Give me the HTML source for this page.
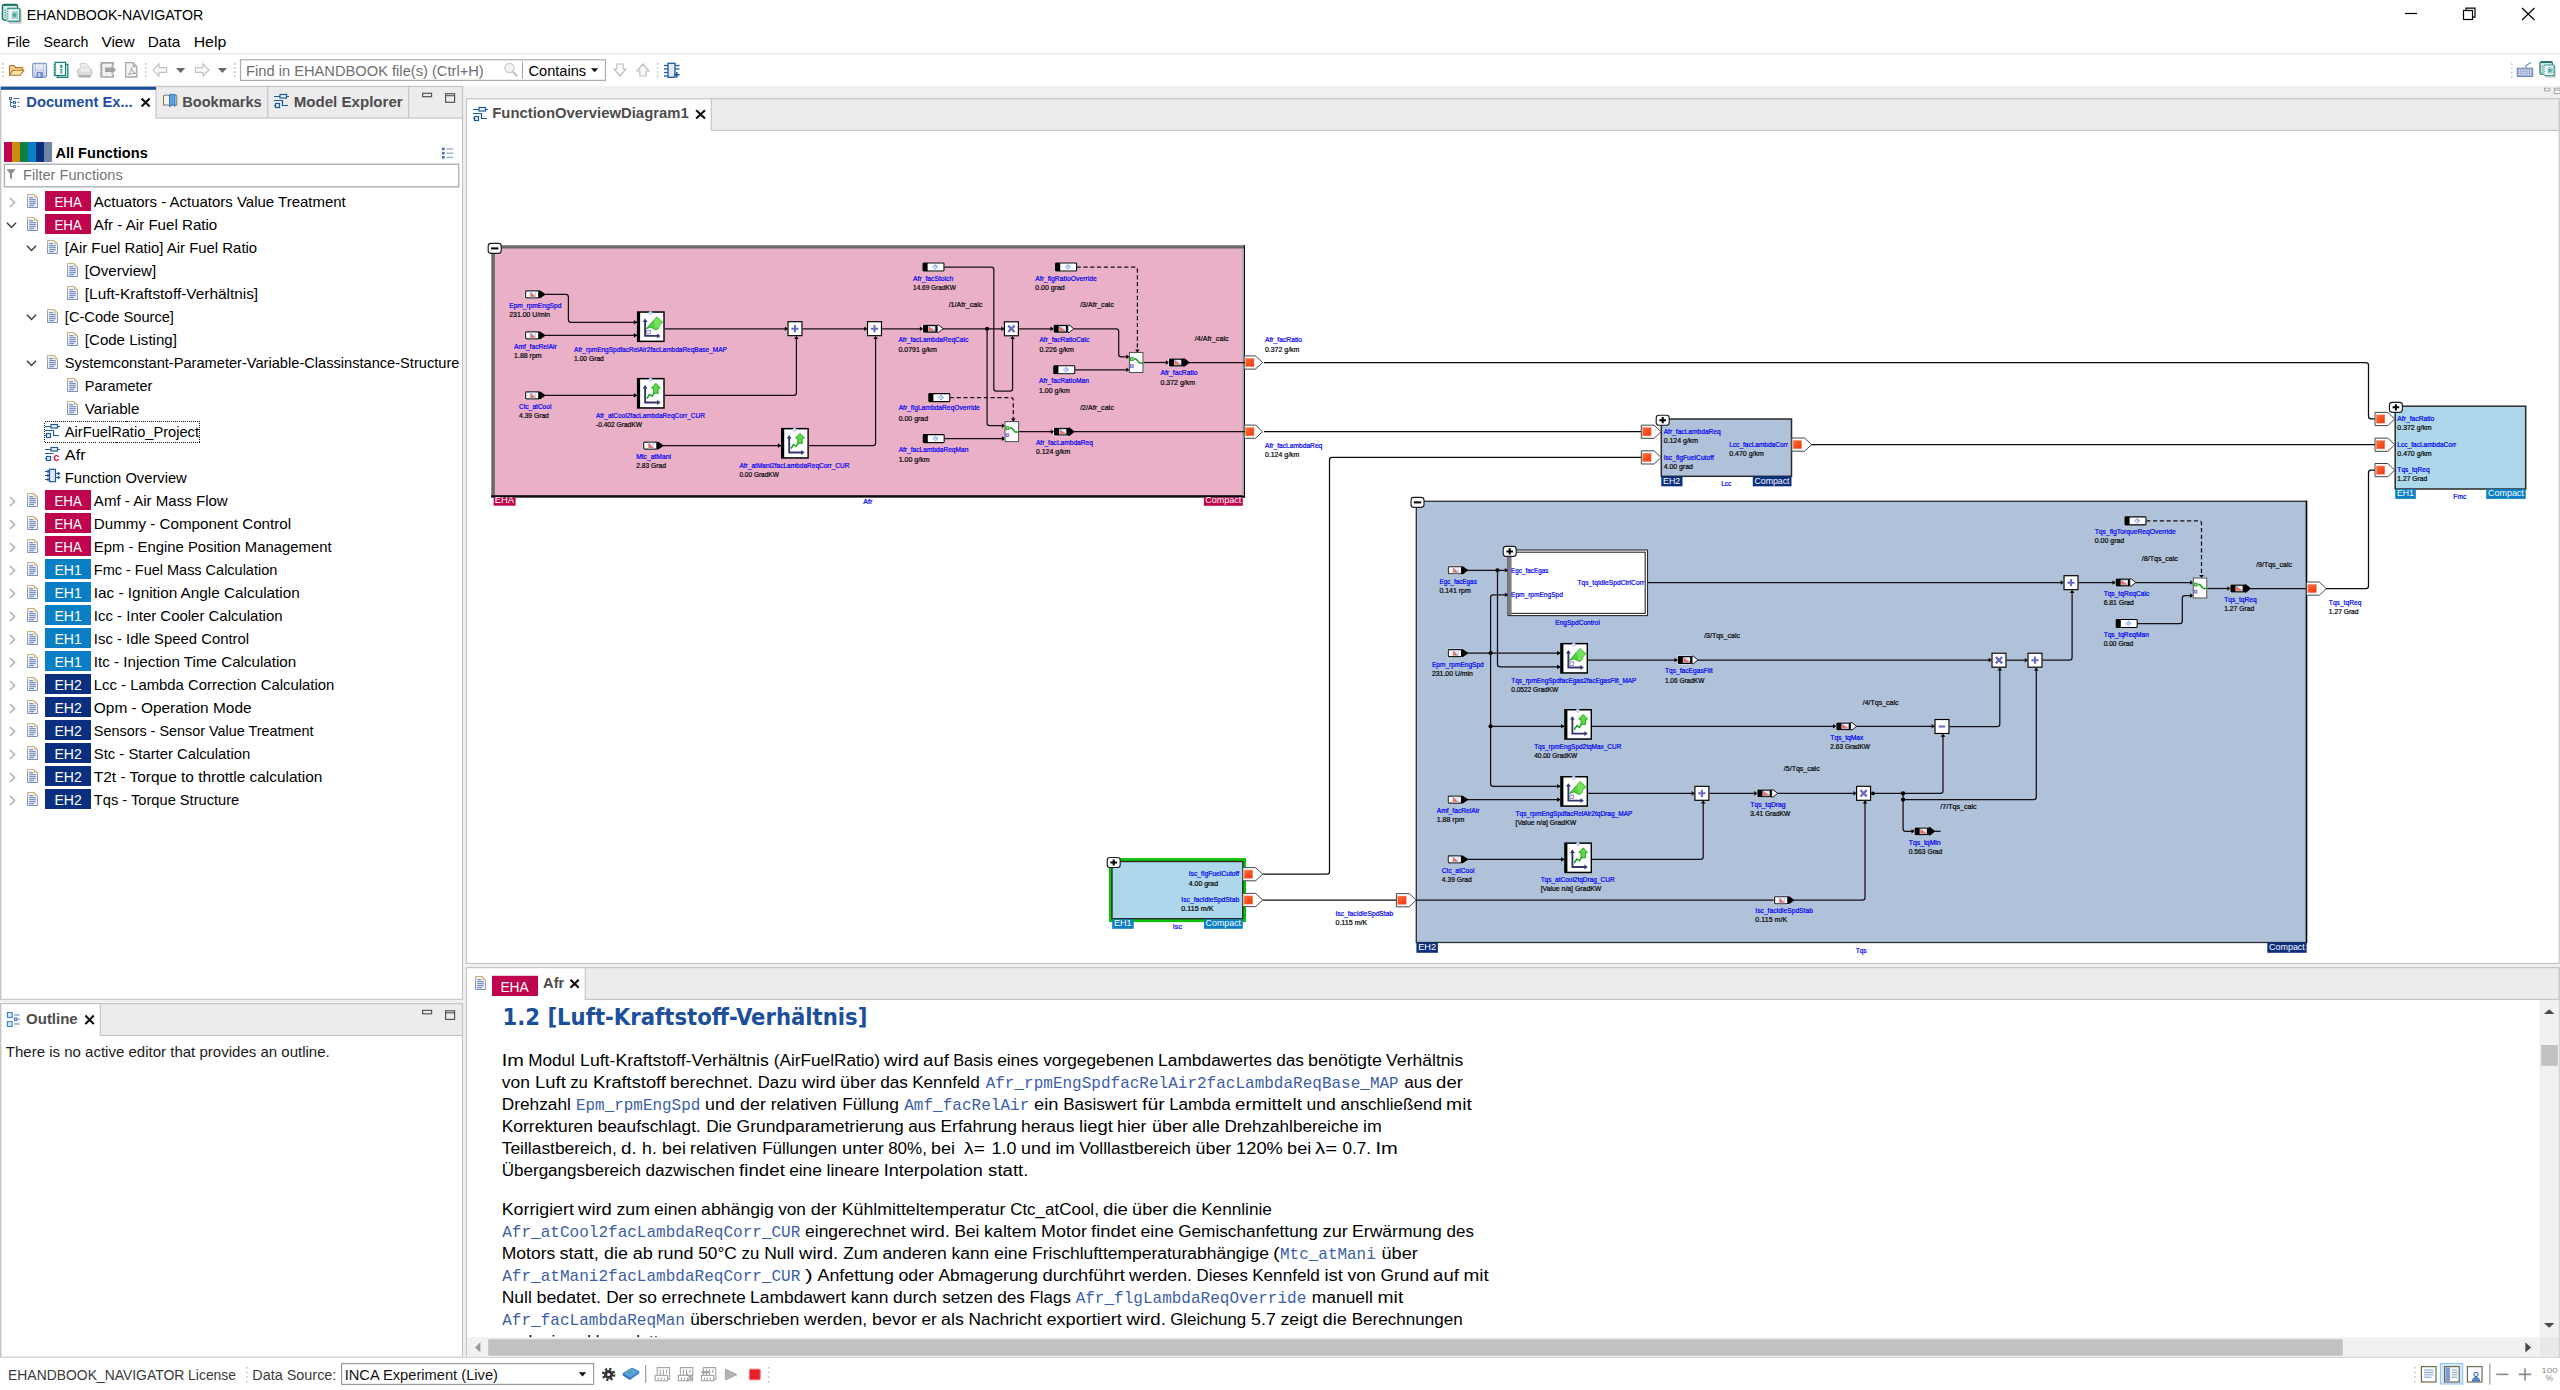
<!DOCTYPE html>
<html lang="de"><head><meta charset="utf-8"><title>EHANDBOOK-NAVIGATOR</title>
<style>
html,body{margin:0;padding:0;background:#fff;overflow:hidden}
#app{position:relative;width:2560px;height:1390px;overflow:hidden}
svg{position:absolute;left:0;top:0;display:block}
text{font-family:"Liberation Sans",sans-serif;white-space:pre}
.mn{font-family:"Liberation Mono",monospace;font-size:15.9px}
.hd{font-family:"DejaVu Sans Condensed","DejaVu Sans","Liberation Sans",sans-serif;font-weight:bold}
</style></head><body>
<div id="app">
<svg width="2560" height="1390" viewBox="0 0 2560 1390">
<defs>
<linearGradient id="docg" x1="0" y1="0" x2="0" y2="1"><stop offset="0" stop-color="#c8b07a"/><stop offset="1" stop-color="#7f90b8"/></linearGradient>
<linearGradient id="org" x1="0" y1="0" x2="1" y2="1"><stop offset="0" stop-color="#ff6e3c"/><stop offset="1" stop-color="#f03408"/></linearGradient>
<linearGradient id="savg" x1="0" y1="0" x2="0" y2="1"><stop offset="0" stop-color="#eef2fa"/><stop offset="1" stop-color="#bccbea"/></linearGradient>
</defs>
<rect x="0" y="0" width="2560" height="1390" fill="#fff"/>
<rect x="0" y="86" width="2560" height="1272" fill="#f0f0f0"/>
<rect x="0" y="53" width="2560" height="1.6" fill="#ececec"/>
<g transform="translate(2 4)">
<rect x="6.6" y="5.6" width="13" height="14.2" fill="#bcbcbc" rx="1" opacity="0.8"/>
<rect x="0.4" y="0.5" width="15.2" height="15.4" fill="#d4e9e5" stroke="#1f7a70" stroke-width="1.5" rx="2.2"/>
<rect x="0.4" y="0.2" width="15.2" height="1.6" fill="#1a6a62" rx="0.8"/>
<rect x="5.6" y="4.4" width="12.2" height="12.8" fill="#f2f9f8" stroke="#3a9a90" stroke-width="1.5" rx="0.8"/>
<rect x="4.6" y="5.6" width="2" height="1.1" fill="#fff"/>
<rect x="2.4" y="5.6" width="2" height="1.1" fill="#58a8a0"/>
<rect x="4.6" y="8" width="2" height="1.1" fill="#fff"/>
<rect x="2.4" y="8" width="2" height="1.1" fill="#58a8a0"/>
<rect x="4.6" y="10.4" width="2" height="1.1" fill="#fff"/>
<rect x="2.4" y="10.4" width="2" height="1.1" fill="#58a8a0"/>
<rect x="4.6" y="12.8" width="2" height="1.1" fill="#fff"/>
<rect x="2.4" y="12.8" width="2" height="1.1" fill="#58a8a0"/>
<rect x="4.6" y="15.2" width="2" height="1.1" fill="#fff"/>
<rect x="2.4" y="15.2" width="2" height="1.1" fill="#58a8a0"/>
<rect x="9" y="7.2" width="7.2" height="7.6" fill="#9fd0c9"/>
<circle cx="12.4" cy="10.9" r="2" fill="#4aa79c"/>
<rect x="8.4" y="5.4" width="1.6" height="8" fill="#eaf6f4"/>
</g>
<text x="26.75" y="20" font-size="15" textLength="176.5" lengthAdjust="spacingAndGlyphs">EHANDBOOK-NAVIGATOR</text>
<line x1="2405" y1="13.5" x2="2417" y2="13.5" stroke="#000" stroke-width="1.2"/>
<rect x="2463.5" y="10.5" width="9" height="9" fill="#fff" stroke="#000" stroke-width="1.2"/>
<path d="M2466 10.5V8.2H2475V17.2H2472.6" fill="none" stroke="#000" stroke-width="1.2"/>
<path d="M2522 8L2534.5 20M2534.5 8L2522 20" fill="none" stroke="#000" stroke-width="1.2"/>
<text x="6.75" y="46.5" font-size="15" textLength="23.4" lengthAdjust="spacingAndGlyphs">File</text>
<text x="43.55" y="46.5" font-size="15" textLength="44.8" lengthAdjust="spacingAndGlyphs">Search</text>
<text x="101.45" y="46.5" font-size="15" textLength="33.1" lengthAdjust="spacingAndGlyphs">View</text>
<text x="147.75" y="46.5" font-size="15" textLength="32.5" lengthAdjust="spacingAndGlyphs">Data</text>
<text x="193.65" y="46.5" font-size="15" textLength="32.6" lengthAdjust="spacingAndGlyphs">Help</text>
<rect x="2" y="63" width="1.6" height="1.6" fill="#c4c4c4"/>
<rect x="2" y="67.17" width="1.6" height="1.6" fill="#c4c4c4"/>
<rect x="2" y="71.33" width="1.6" height="1.6" fill="#c4c4c4"/>
<rect x="2" y="75.5" width="1.6" height="1.6" fill="#c4c4c4"/>
<path d="M9.6 75.2V66.6q0-1 1-1h3.4l1.6 2h6.2q1 0 1 1v2" fill="#f8dc98" stroke="#b56f28" stroke-width="1.1"/>
<path d="M9.6 75.2l3-5h11.2l-3.4 5z" fill="#fbe6a8" stroke="#b56f28" stroke-width="1.1"/>
<rect x="32.6" y="63.4" width="14" height="14" rx="1.8" fill="url(#savg)" stroke="#7e96c6" stroke-width="1.1"/>
<rect x="35.6" y="64" width="8" height="6" fill="#f4f6fb" stroke="#9fb0d4" stroke-width="0.7"/>
<line x1="36.8" y1="66" x2="42.4" y2="66" stroke="#c4cde0" stroke-width="0.7"/>
<line x1="36.8" y1="68" x2="42.4" y2="68" stroke="#c4cde0" stroke-width="0.7"/>
<rect x="37" y="72.4" width="5.6" height="5" fill="#6f8cc8" stroke="#5f7cc0" stroke-width="0.6"/>
<rect x="38" y="73.2" width="2.4" height="3.4" fill="#cfdaf2"/>
<rect x="57.4" y="64.4" width="10.4" height="13" fill="#fff" stroke="#16837a" stroke-width="1.3"/>
<rect x="55" y="62.4" width="10.6" height="13.2" fill="#fff" stroke="#16837a" stroke-width="1.3"/>
<polygon points="53.6,64 56,64.6 53.6,65.4" fill="#16837a"/>
<polygon points="53.6,66.5 56,67.1 53.6,67.9" fill="#16837a"/>
<polygon points="53.6,69 56,69.6 53.6,70.4" fill="#16837a"/>
<polygon points="53.6,71.5 56,72.1 53.6,72.9" fill="#16837a"/>
<polygon points="53.6,74 56,74.6 53.6,75.4" fill="#16837a"/>
<rect x="59.6" y="64.6" width="3.4" height="9" fill="#e2f2ef"/>
<rect x="60.4" y="64.8" width="1.8" height="3" fill="#16837a"/>
<rect x="60.2" y="69" width="2.2" height="0.9" fill="#16837a"/>
<rect x="60.2" y="70.7" width="2.2" height="0.9" fill="#16837a"/>
<rect x="60.2" y="72.4" width="2.2" height="0.9" fill="#16837a"/>
<path d="M80.4 71.4V63.4h5.6l2.8 2.6v5.4" fill="#efefef" stroke="#cfcfcf" stroke-width="1"/>
<line x1="81.8" y1="67.2" x2="87" y2="67.2" stroke="#d4d4d4" stroke-width="0.9"/>
<line x1="81.8" y1="69.2" x2="87" y2="69.2" stroke="#d4d4d4" stroke-width="0.9"/>
<rect x="77.4" y="68.8" width="14.6" height="6.8" fill="#dcdcdc" stroke="#c8c8c8" stroke-width="1" rx="2"/>
<rect x="80.2" y="68.2" width="9" height="3.4" fill="#efefef"/>
<rect x="78.4" y="75.2" width="12.6" height="2.4" fill="#ababab" rx="1"/>
<path d="M113.2 66V62.8H101.4V77H113.2V74" fill="#f0f0f0" stroke="#a8a8a8" stroke-width="1.7"/>
<rect x="99.8" y="64" width="2.4" height="1.1" fill="#a8a8a8"/>
<rect x="99.8" y="66.6" width="2.4" height="1.1" fill="#a8a8a8"/>
<rect x="99.8" y="69.2" width="2.4" height="1.1" fill="#a8a8a8"/>
<rect x="99.8" y="71.8" width="2.4" height="1.1" fill="#a8a8a8"/>
<rect x="99.8" y="74.4" width="2.4" height="1.1" fill="#a8a8a8"/>
<path d="M105 67.6h6.6v-2.4l4.4 4.6l-4.4 4.6v-2.4h-6.6z" fill="#a2a2a2"/>
<path d="M125.6 62.6h7.6l3.6 3.8v10.6h-11.2z" fill="#f2f2f2" stroke="#a8a8a8" stroke-width="1.3"/>
<path d="M133.2 62.6v3.8h3.6" fill="none" stroke="#a8a8a8" stroke-width="1.1"/>
<path d="M128.2 74.6c2-1.4 3.2-4 3.2-6.8c.4 2.8 1.8 4.8 4.6 5.6c-2.8-.2-5.4.2-7.8 1.2z" fill="none" stroke="#a0a0a0" stroke-width="0.9"/>
<rect x="145" y="63" width="1.6" height="1.6" fill="#c4c4c4"/>
<rect x="145" y="67.17" width="1.6" height="1.6" fill="#c4c4c4"/>
<rect x="145" y="71.33" width="1.6" height="1.6" fill="#c4c4c4"/>
<rect x="145" y="75.5" width="1.6" height="1.6" fill="#c4c4c4"/>
<path d="M153 70l6-6v3.6h7.6v4.8H159V76z" fill="#fafafa" stroke="#c4c4c4" stroke-width="1.2"/>
<polygon points="176,68 185.2,68 180.6,73" fill="#6a6a6a"/>
<path d="M209 70l-6-6v3.6h-7.6v4.8H203V76z" fill="#fafafa" stroke="#c4c4c4" stroke-width="1.2"/>
<polygon points="217.8,68 227,68 222.4,73" fill="#6a6a6a"/>
<rect x="234" y="63" width="1.6" height="1.6" fill="#c4c4c4"/>
<rect x="234" y="67.17" width="1.6" height="1.6" fill="#c4c4c4"/>
<rect x="234" y="71.33" width="1.6" height="1.6" fill="#c4c4c4"/>
<rect x="234" y="75.5" width="1.6" height="1.6" fill="#c4c4c4"/>
<rect x="240.5" y="59.8" width="365" height="20.6" fill="#fff" stroke="#ababab" stroke-width="1.2"/>
<text x="246.05" y="76.3" font-size="15" fill="#6f6f6f" textLength="237.7" lengthAdjust="spacingAndGlyphs">Find in EHANDBOOK file(s) (Ctrl+H)</text>
<circle cx="509.5" cy="68" r="4.6" fill="#f4f4f4" stroke="#c9c9c9" stroke-width="1.3"/>
<line x1="512.8" y1="71.6" x2="517.2" y2="76.2" stroke="#bdbdbd" stroke-width="2"/>
<line x1="522.4" y1="61.5" x2="522.4" y2="78.7" stroke="#9a9a9a" stroke-width="1"/>
<text x="528.45" y="76.3" font-size="15" textLength="57.7" lengthAdjust="spacingAndGlyphs">Contains</text>
<polygon points="591,68.2 598.2,68.2 594.6,72.2" fill="#111"/>
<path d="M620 64h-3.2v5h-2.8l6 7l6-7h-2.8v-5z" fill="#fafafa" stroke="#c0c0c0" stroke-width="1.2"/>
<path d="M643 76h-3.2v-5h-2.8l6-7l6 7h-2.8v5z" fill="#fafafa" stroke="#c0c0c0" stroke-width="1.2"/>
<rect x="657" y="63" width="1.6" height="1.6" fill="#c4c4c4"/>
<rect x="657" y="67.17" width="1.6" height="1.6" fill="#c4c4c4"/>
<rect x="657" y="71.33" width="1.6" height="1.6" fill="#c4c4c4"/>
<rect x="657" y="75.5" width="1.6" height="1.6" fill="#c4c4c4"/>
<rect x="668" y="63.3" width="7" height="14" fill="#dfe8f4" stroke="#1c5aa0" stroke-width="1.3"/>
<line x1="664" y1="65.5" x2="668" y2="65.5" stroke="#1c5aa0" stroke-width="1.3"/>
<line x1="664" y1="69" x2="668" y2="69" stroke="#1c5aa0" stroke-width="1.3"/>
<line x1="664" y1="72.5" x2="668" y2="72.5" stroke="#1c5aa0" stroke-width="1.3"/>
<line x1="664" y1="76" x2="668" y2="76" stroke="#1c5aa0" stroke-width="1.3"/>
<line x1="675" y1="65.5" x2="679.5" y2="65.5" stroke="#1c5aa0" stroke-width="1.3"/>
<line x1="675" y1="69" x2="679.5" y2="69" stroke="#1c5aa0" stroke-width="1.3"/>
<path d="M674 74.8h5.6M676.8 72v5.6" fill="none" stroke="#1c5aa0" stroke-width="1.6"/>
<rect x="2511" y="63.3" width="1.6" height="1.6" fill="#c4c4c4"/>
<rect x="2511" y="67.53" width="1.6" height="1.6" fill="#c4c4c4"/>
<rect x="2511" y="71.77" width="1.6" height="1.6" fill="#c4c4c4"/>
<rect x="2511" y="76" width="1.6" height="1.6" fill="#c4c4c4"/>
<rect x="2517.3" y="68.2" width="15.4" height="8.4" fill="#9fb0d0" stroke="#6f86b5" stroke-width="1"/>
<rect x="2518.8" y="69.6" width="1.2" height="1" fill="#e8eef8"/>
<rect x="2521" y="69.6" width="1.2" height="1" fill="#e8eef8"/>
<rect x="2523.2" y="69.6" width="1.2" height="1" fill="#e8eef8"/>
<rect x="2525.4" y="69.6" width="1.2" height="1" fill="#e8eef8"/>
<rect x="2527.6" y="69.6" width="1.2" height="1" fill="#e8eef8"/>
<rect x="2529.8" y="69.6" width="1.2" height="1" fill="#e8eef8"/>
<rect x="2518.8" y="71.7" width="1.2" height="1" fill="#e8eef8"/>
<rect x="2521" y="71.7" width="1.2" height="1" fill="#e8eef8"/>
<rect x="2523.2" y="71.7" width="1.2" height="1" fill="#e8eef8"/>
<rect x="2525.4" y="71.7" width="1.2" height="1" fill="#e8eef8"/>
<rect x="2527.6" y="71.7" width="1.2" height="1" fill="#e8eef8"/>
<rect x="2529.8" y="71.7" width="1.2" height="1" fill="#e8eef8"/>
<rect x="2518.8" y="73.8" width="1.2" height="1" fill="#e8eef8"/>
<rect x="2521" y="73.8" width="1.2" height="1" fill="#e8eef8"/>
<rect x="2523.2" y="73.8" width="1.2" height="1" fill="#e8eef8"/>
<rect x="2525.4" y="73.8" width="1.2" height="1" fill="#e8eef8"/>
<rect x="2527.6" y="73.8" width="1.2" height="1" fill="#e8eef8"/>
<rect x="2529.8" y="73.8" width="1.2" height="1" fill="#e8eef8"/>
<path d="M2526 68v-2.5l5-3" fill="none" stroke="#6f86b5" stroke-width="1.1"/>
<g transform="translate(2539.6 61.4) scale(0.82)">
<g transform="translate(0 0)">
<rect x="6.6" y="5.6" width="13" height="14.2" fill="#bcbcbc" rx="1" opacity="0.8"/>
<rect x="0.4" y="0.5" width="15.2" height="15.4" fill="#d4e9e5" stroke="#1f7a70" stroke-width="1.5" rx="2.2"/>
<rect x="0.4" y="0.2" width="15.2" height="1.6" fill="#1a6a62" rx="0.8"/>
<rect x="5.6" y="4.4" width="12.2" height="12.8" fill="#f2f9f8" stroke="#3a9a90" stroke-width="1.5" rx="0.8"/>
<rect x="4.6" y="5.6" width="2" height="1.1" fill="#fff"/>
<rect x="2.4" y="5.6" width="2" height="1.1" fill="#58a8a0"/>
<rect x="4.6" y="8" width="2" height="1.1" fill="#fff"/>
<rect x="2.4" y="8" width="2" height="1.1" fill="#58a8a0"/>
<rect x="4.6" y="10.4" width="2" height="1.1" fill="#fff"/>
<rect x="2.4" y="10.4" width="2" height="1.1" fill="#58a8a0"/>
<rect x="4.6" y="12.8" width="2" height="1.1" fill="#fff"/>
<rect x="2.4" y="12.8" width="2" height="1.1" fill="#58a8a0"/>
<rect x="4.6" y="15.2" width="2" height="1.1" fill="#fff"/>
<rect x="2.4" y="15.2" width="2" height="1.1" fill="#58a8a0"/>
<rect x="9" y="7.2" width="7.2" height="7.6" fill="#9fd0c9"/>
<circle cx="12.4" cy="10.9" r="2" fill="#4aa79c"/>
<rect x="8.4" y="5.4" width="1.6" height="8" fill="#eaf6f4"/>
</g>
</g>
<rect x="0" y="86.5" width="462.5" height="912.8" fill="#fff" stroke="#c6c6c6" stroke-width="1.2"/>
<rect x="0" y="86" width="1.4" height="913" fill="#c4c4c4"/>
<rect x="156" y="86.5" width="306.5" height="31.6" fill="#ececec" stroke="#c6c6c6" stroke-width="1.2"/>
<line x1="267.7" y1="87" x2="267.7" y2="118" stroke="#c6c6c6" stroke-width="1.2"/>
<line x1="408.6" y1="87" x2="408.6" y2="118" stroke="#c6c6c6" stroke-width="1.2"/>
<rect x="1" y="86.8" width="155" height="3" fill="#1c4f9c"/>
<g stroke="#4a6ea8" stroke-width="1" fill="none">
<path d="M10.5 99.5V106.5M10.5 102.5H13.5M10.5 106.5H13.5M13.5 98.5H19.5M17.5 102.5H19.5M17.5 106.5H19.5"/>
<rect x="9.5" y="97.5" width="2" height="2" fill="#dfe9f6"/><rect x="13.5" y="101.5" width="2" height="2" fill="#dfe9f6"/><rect x="13.5" y="105.5" width="2" height="2" fill="#dfe9f6"/>
</g>
<text x="26.27" y="106.6" font-size="14.5" fill="#1c4f9c" font-weight="bold" textLength="106.45" lengthAdjust="spacingAndGlyphs">Document Ex...</text>
<path d="M141.6 98.4L149.6 106.6M149.6 98.4L141.6 106.6" fill="none" stroke="#111" stroke-width="2.1"/>
<path d="M163.5 95.5c3-.8 5-.4 6.6.8v9.8c-1.6-1.2-3.6-1.6-6.6-.8z" fill="#f7f3e6" stroke="#7d7457" stroke-width="1"/>
<path d="M176.8 95.5c-3-.8-5-.4-6.6.8v9.8c1.6-1.2 3.6-1.6 6.6-.8z" fill="#f7f3e6" stroke="#7d7457" stroke-width="1"/>
<path d="M169.6 94.4h5.4v12l-2.7-2.2l-2.7 2.2z" fill="#5aa2ee" stroke="#2c6fc0" stroke-width="0.9"/>
<text x="182.28" y="106.6" font-size="14.5" fill="#4d4d4d" font-weight="bold" textLength="79.45" lengthAdjust="spacingAndGlyphs">Bookmarks</text>
<g transform="translate(274 94)" stroke="#1c5aa0" stroke-width="1.2" fill="none">
<rect x="6" y="0.5" width="6.5" height="3.5" fill="#eef3fa"/>
<path d="M0 2.5H6M12.5 2.5H15"/>
<path d="M0 6.5H8.5V11.5M8 11.5H14"/>
<rect x="1.5" y="9.5" width="4" height="4" fill="#eef3fa"/>
<path d="M0 11.5H1.5"/>
</g>
<text x="293.67" y="106.6" font-size="14.5" fill="#4d4d4d" font-weight="bold" textLength="109.05" lengthAdjust="spacingAndGlyphs">Model Explorer</text>
<rect x="422.6" y="93.3" width="9" height="3.4" fill="none" stroke="#505050" stroke-width="1.15"/>
<rect x="445.6" y="93.7" width="9" height="8.6" fill="none" stroke="#505050" stroke-width="1.15"/>
<line x1="445.6" y1="95.7" x2="454.6" y2="95.7" stroke="#505050" stroke-width="1.1"/>
<rect x="4" y="142" width="8.05" height="20" fill="#c0054f"/>
<rect x="12" y="142" width="8.05" height="20" fill="#cf8a0b"/>
<rect x="20" y="142" width="8.05" height="20" fill="#0c8043"/>
<rect x="28" y="142" width="8.05" height="20" fill="#0a7fc5"/>
<rect x="36" y="142" width="8.05" height="20" fill="#0a2f7f"/>
<rect x="44" y="142" width="8.05" height="20" fill="#6f87a3"/>
<text x="55.45" y="157.9" font-size="15" font-weight="bold" textLength="92.3" lengthAdjust="spacingAndGlyphs">All Functions</text>
<rect x="442" y="147.6" width="2.6" height="2.6" fill="#3f6fb5"/>
<rect x="446.3" y="148.4" width="7" height="1.1" fill="#7f9fcf"/>
<rect x="442" y="151.8" width="2.6" height="2.6" fill="#3f6fb5"/>
<rect x="446.3" y="152.6" width="7" height="1.1" fill="#7f9fcf"/>
<rect x="442" y="156" width="2.6" height="2.6" fill="#3f6fb5"/>
<rect x="446.3" y="156.8" width="7" height="1.1" fill="#7f9fcf"/>
<rect x="4.4" y="164.2" width="454.4" height="22.6" fill="#fff" stroke="#ababab" stroke-width="1.3"/>
<path d="M6.4 169.2H15.6L12 173.6V179.6L10 178V173.6Z" fill="#8a8a8a"/>
<text x="23.05" y="180.4" font-size="15" fill="#767676" textLength="99.7" lengthAdjust="spacingAndGlyphs">Filter Functions</text>
<path d="M10 198L14.6 202.5L10 207" fill="none" stroke="#a6a6a6" stroke-width="1.3"/>
<g transform="translate(27 194)">
<path d="M0.5 0.5H7.3L10.5 3.7V13.5H0.5Z" fill="#eef2fa" stroke="url(#docg)" stroke-width="1"/>
<path d="M7.3 0.5V3.7H10.5Z" fill="#e9d39a" stroke="#c9b27a" stroke-width="0.6"/>
<rect x="2.2" y="3.2" width="3.8" height="1" fill="#5d7ab8"/>
<rect x="2.2" y="5.2" width="6.6" height="1" fill="#5d7ab8"/>
<rect x="2.2" y="7.2" width="6.6" height="1" fill="#5d7ab8"/>
<rect x="2.2" y="9.2" width="6.6" height="1" fill="#5d7ab8"/>
<rect x="2.2" y="11.2" width="4.8" height="1" fill="#5d7ab8"/>
</g>
<rect x="45" y="191" width="46" height="20" fill="#c0054f"/>
<text x="54.45" y="206.9" font-size="15" fill="#fff" textLength="27.3" lengthAdjust="spacingAndGlyphs">EHA</text>
<text x="93.85" y="206.8" font-size="15" textLength="251.9" lengthAdjust="spacingAndGlyphs">Actuators - Actuators Value Treatment</text>
<path d="M7 222.8L11.5 227.4L16 222.8" fill="none" stroke="#404040" stroke-width="1.5"/>
<g transform="translate(27 217)">
<path d="M0.5 0.5H7.3L10.5 3.7V13.5H0.5Z" fill="#eef2fa" stroke="url(#docg)" stroke-width="1"/>
<path d="M7.3 0.5V3.7H10.5Z" fill="#e9d39a" stroke="#c9b27a" stroke-width="0.6"/>
<rect x="2.2" y="3.2" width="3.8" height="1" fill="#5d7ab8"/>
<rect x="2.2" y="5.2" width="6.6" height="1" fill="#5d7ab8"/>
<rect x="2.2" y="7.2" width="6.6" height="1" fill="#5d7ab8"/>
<rect x="2.2" y="9.2" width="6.6" height="1" fill="#5d7ab8"/>
<rect x="2.2" y="11.2" width="4.8" height="1" fill="#5d7ab8"/>
</g>
<rect x="45" y="214" width="46" height="20" fill="#c0054f"/>
<text x="54.45" y="229.9" font-size="15" fill="#fff" textLength="27.3" lengthAdjust="spacingAndGlyphs">EHA</text>
<text x="93.85" y="229.8" font-size="15" textLength="123.4" lengthAdjust="spacingAndGlyphs">Afr - Air Fuel Ratio</text>
<path d="M27 245.8L31.5 250.4L36 245.8" fill="none" stroke="#404040" stroke-width="1.5"/>
<g transform="translate(47 240)">
<path d="M0.5 0.5H7.3L10.5 3.7V13.5H0.5Z" fill="#eef2fa" stroke="url(#docg)" stroke-width="1"/>
<path d="M7.3 0.5V3.7H10.5Z" fill="#e9d39a" stroke="#c9b27a" stroke-width="0.6"/>
<rect x="2.2" y="3.2" width="3.8" height="1" fill="#5d7ab8"/>
<rect x="2.2" y="5.2" width="6.6" height="1" fill="#5d7ab8"/>
<rect x="2.2" y="7.2" width="6.6" height="1" fill="#5d7ab8"/>
<rect x="2.2" y="9.2" width="6.6" height="1" fill="#5d7ab8"/>
<rect x="2.2" y="11.2" width="4.8" height="1" fill="#5d7ab8"/>
</g>
<text x="64.85" y="252.8" font-size="15" textLength="192.3" lengthAdjust="spacingAndGlyphs">[Air Fuel Ratio] Air Fuel Ratio</text>
<g transform="translate(67 263)">
<path d="M0.5 0.5H7.3L10.5 3.7V13.5H0.5Z" fill="#eef2fa" stroke="url(#docg)" stroke-width="1"/>
<path d="M7.3 0.5V3.7H10.5Z" fill="#e9d39a" stroke="#c9b27a" stroke-width="0.6"/>
<rect x="2.2" y="3.2" width="3.8" height="1" fill="#5d7ab8"/>
<rect x="2.2" y="5.2" width="6.6" height="1" fill="#5d7ab8"/>
<rect x="2.2" y="7.2" width="6.6" height="1" fill="#5d7ab8"/>
<rect x="2.2" y="9.2" width="6.6" height="1" fill="#5d7ab8"/>
<rect x="2.2" y="11.2" width="4.8" height="1" fill="#5d7ab8"/>
</g>
<text x="84.85" y="275.8" font-size="15" textLength="71.3" lengthAdjust="spacingAndGlyphs">[Overview]</text>
<g transform="translate(67 286)">
<path d="M0.5 0.5H7.3L10.5 3.7V13.5H0.5Z" fill="#eef2fa" stroke="url(#docg)" stroke-width="1"/>
<path d="M7.3 0.5V3.7H10.5Z" fill="#e9d39a" stroke="#c9b27a" stroke-width="0.6"/>
<rect x="2.2" y="3.2" width="3.8" height="1" fill="#5d7ab8"/>
<rect x="2.2" y="5.2" width="6.6" height="1" fill="#5d7ab8"/>
<rect x="2.2" y="7.2" width="6.6" height="1" fill="#5d7ab8"/>
<rect x="2.2" y="9.2" width="6.6" height="1" fill="#5d7ab8"/>
<rect x="2.2" y="11.2" width="4.8" height="1" fill="#5d7ab8"/>
</g>
<text x="84.85" y="298.8" font-size="15" textLength="173.3" lengthAdjust="spacingAndGlyphs">[Luft-Kraftstoff-Verhältnis]</text>
<path d="M27 314.8L31.5 319.4L36 314.8" fill="none" stroke="#404040" stroke-width="1.5"/>
<g transform="translate(47 309)">
<path d="M0.5 0.5H7.3L10.5 3.7V13.5H0.5Z" fill="#eef2fa" stroke="url(#docg)" stroke-width="1"/>
<path d="M7.3 0.5V3.7H10.5Z" fill="#e9d39a" stroke="#c9b27a" stroke-width="0.6"/>
<rect x="2.2" y="3.2" width="3.8" height="1" fill="#5d7ab8"/>
<rect x="2.2" y="5.2" width="6.6" height="1" fill="#5d7ab8"/>
<rect x="2.2" y="7.2" width="6.6" height="1" fill="#5d7ab8"/>
<rect x="2.2" y="9.2" width="6.6" height="1" fill="#5d7ab8"/>
<rect x="2.2" y="11.2" width="4.8" height="1" fill="#5d7ab8"/>
</g>
<text x="64.85" y="321.8" font-size="15" textLength="109.1" lengthAdjust="spacingAndGlyphs">[C-Code Source]</text>
<g transform="translate(67 332)">
<path d="M0.5 0.5H7.3L10.5 3.7V13.5H0.5Z" fill="#eef2fa" stroke="url(#docg)" stroke-width="1"/>
<path d="M7.3 0.5V3.7H10.5Z" fill="#e9d39a" stroke="#c9b27a" stroke-width="0.6"/>
<rect x="2.2" y="3.2" width="3.8" height="1" fill="#5d7ab8"/>
<rect x="2.2" y="5.2" width="6.6" height="1" fill="#5d7ab8"/>
<rect x="2.2" y="7.2" width="6.6" height="1" fill="#5d7ab8"/>
<rect x="2.2" y="9.2" width="6.6" height="1" fill="#5d7ab8"/>
<rect x="2.2" y="11.2" width="4.8" height="1" fill="#5d7ab8"/>
</g>
<text x="84.85" y="344.8" font-size="15" textLength="92" lengthAdjust="spacingAndGlyphs">[Code Listing]</text>
<path d="M27 360.8L31.5 365.4L36 360.8" fill="none" stroke="#404040" stroke-width="1.5"/>
<g transform="translate(47 355)">
<path d="M0.5 0.5H7.3L10.5 3.7V13.5H0.5Z" fill="#eef2fa" stroke="url(#docg)" stroke-width="1"/>
<path d="M7.3 0.5V3.7H10.5Z" fill="#e9d39a" stroke="#c9b27a" stroke-width="0.6"/>
<rect x="2.2" y="3.2" width="3.8" height="1" fill="#5d7ab8"/>
<rect x="2.2" y="5.2" width="6.6" height="1" fill="#5d7ab8"/>
<rect x="2.2" y="7.2" width="6.6" height="1" fill="#5d7ab8"/>
<rect x="2.2" y="9.2" width="6.6" height="1" fill="#5d7ab8"/>
<rect x="2.2" y="11.2" width="4.8" height="1" fill="#5d7ab8"/>
</g>
<text x="64.85" y="367.8" font-size="15" textLength="394.6" lengthAdjust="spacingAndGlyphs">Systemconstant-Parameter-Variable-Classinstance-Structure</text>
<g transform="translate(67 378)">
<path d="M0.5 0.5H7.3L10.5 3.7V13.5H0.5Z" fill="#eef2fa" stroke="url(#docg)" stroke-width="1"/>
<path d="M7.3 0.5V3.7H10.5Z" fill="#e9d39a" stroke="#c9b27a" stroke-width="0.6"/>
<rect x="2.2" y="3.2" width="3.8" height="1" fill="#5d7ab8"/>
<rect x="2.2" y="5.2" width="6.6" height="1" fill="#5d7ab8"/>
<rect x="2.2" y="7.2" width="6.6" height="1" fill="#5d7ab8"/>
<rect x="2.2" y="9.2" width="6.6" height="1" fill="#5d7ab8"/>
<rect x="2.2" y="11.2" width="4.8" height="1" fill="#5d7ab8"/>
</g>
<text x="84.85" y="390.8" font-size="15" textLength="67.6" lengthAdjust="spacingAndGlyphs">Parameter</text>
<g transform="translate(67 401)">
<path d="M0.5 0.5H7.3L10.5 3.7V13.5H0.5Z" fill="#eef2fa" stroke="url(#docg)" stroke-width="1"/>
<path d="M7.3 0.5V3.7H10.5Z" fill="#e9d39a" stroke="#c9b27a" stroke-width="0.6"/>
<rect x="2.2" y="3.2" width="3.8" height="1" fill="#5d7ab8"/>
<rect x="2.2" y="5.2" width="6.6" height="1" fill="#5d7ab8"/>
<rect x="2.2" y="7.2" width="6.6" height="1" fill="#5d7ab8"/>
<rect x="2.2" y="9.2" width="6.6" height="1" fill="#5d7ab8"/>
<rect x="2.2" y="11.2" width="4.8" height="1" fill="#5d7ab8"/>
</g>
<text x="84.85" y="413.8" font-size="15" textLength="54.6" lengthAdjust="spacingAndGlyphs">Variable</text>
<g transform="translate(45 424)" stroke="#1c5aa0" stroke-width="1.2" fill="none">
<rect x="6" y="0.5" width="6.5" height="3.5" fill="#eef3fa"/>
<path d="M0 2.5H6M12.5 2.5H15"/>
<path d="M0 6.5H8.5V11.5M8 11.5H14"/>
<rect x="1.5" y="9.5" width="4" height="4" fill="#eef3fa"/>
<path d="M0 11.5H1.5"/>
</g>
<text x="64.85" y="436.8" font-size="15" textLength="134.1" lengthAdjust="spacingAndGlyphs">AirFuelRatio_Project</text>
<rect x="44.5" y="421.5" width="155" height="21" fill="none" stroke="#111" stroke-width="1" stroke-dasharray="1 1" shape-rendering="crispEdges"/>
<g transform="translate(45 447)" stroke="#1c5aa0" stroke-width="1.2" fill="none">
<rect x="6" y="0.5" width="6.5" height="3.5" fill="#eef3fa"/>
<path d="M0 2.5H6M12.5 2.5H15"/>
<path d="M0 6.5H8.5V11.5M8 11.5H14"/>
<rect x="1.5" y="9.5" width="4" height="4" fill="#eef3fa"/>
<path d="M0 11.5H1.5"/>
</g>
<rect x="52.6" y="453.5" width="7.4" height="8" fill="#fff"/>
<text x="53.2" y="461" font-size="11" fill="#d8124a" font-weight="bold">c</text>
<text x="64.85" y="459.8" font-size="15" textLength="20.8" lengthAdjust="spacingAndGlyphs">Afr</text>
<g stroke="#1c5aa0" stroke-width="1.2" fill="none">
<rect x="49.5" y="469.3" width="6" height="12.4" fill="#e3eaf4"/>
<path d="M45 471.5H49.5M47.4 470.1L49.2 471.5L47.4 472.9"/>
<path d="M45 475.5H49.5M47.4 474.1L49.2 475.5L47.4 476.9"/>
<path d="M45 479.5H49.5M47.4 478.1L49.2 479.5L47.4 480.9"/>
<path d="M55.5 473.5H60M57.8 472.1L59.6 473.5L57.8 474.9"/>
<path d="M55.5 477.5H60M57.8 476.1L59.6 477.5L57.8 478.9"/>
</g>
<text x="64.85" y="482.8" font-size="15" textLength="121.9" lengthAdjust="spacingAndGlyphs">Function Overview</text>
<path d="M10 497L14.6 501.5L10 506" fill="none" stroke="#a6a6a6" stroke-width="1.3"/>
<g transform="translate(27 493)">
<path d="M0.5 0.5H7.3L10.5 3.7V13.5H0.5Z" fill="#eef2fa" stroke="url(#docg)" stroke-width="1"/>
<path d="M7.3 0.5V3.7H10.5Z" fill="#e9d39a" stroke="#c9b27a" stroke-width="0.6"/>
<rect x="2.2" y="3.2" width="3.8" height="1" fill="#5d7ab8"/>
<rect x="2.2" y="5.2" width="6.6" height="1" fill="#5d7ab8"/>
<rect x="2.2" y="7.2" width="6.6" height="1" fill="#5d7ab8"/>
<rect x="2.2" y="9.2" width="6.6" height="1" fill="#5d7ab8"/>
<rect x="2.2" y="11.2" width="4.8" height="1" fill="#5d7ab8"/>
</g>
<rect x="45" y="490" width="46" height="20" fill="#c0054f"/>
<text x="54.45" y="505.9" font-size="15" fill="#fff" textLength="27.3" lengthAdjust="spacingAndGlyphs">EHA</text>
<text x="93.85" y="505.8" font-size="15" textLength="133.9" lengthAdjust="spacingAndGlyphs">Amf - Air Mass Flow</text>
<path d="M10 520L14.6 524.5L10 529" fill="none" stroke="#a6a6a6" stroke-width="1.3"/>
<g transform="translate(27 516)">
<path d="M0.5 0.5H7.3L10.5 3.7V13.5H0.5Z" fill="#eef2fa" stroke="url(#docg)" stroke-width="1"/>
<path d="M7.3 0.5V3.7H10.5Z" fill="#e9d39a" stroke="#c9b27a" stroke-width="0.6"/>
<rect x="2.2" y="3.2" width="3.8" height="1" fill="#5d7ab8"/>
<rect x="2.2" y="5.2" width="6.6" height="1" fill="#5d7ab8"/>
<rect x="2.2" y="7.2" width="6.6" height="1" fill="#5d7ab8"/>
<rect x="2.2" y="9.2" width="6.6" height="1" fill="#5d7ab8"/>
<rect x="2.2" y="11.2" width="4.8" height="1" fill="#5d7ab8"/>
</g>
<rect x="45" y="513" width="46" height="20" fill="#c0054f"/>
<text x="54.45" y="528.9" font-size="15" fill="#fff" textLength="27.3" lengthAdjust="spacingAndGlyphs">EHA</text>
<text x="93.85" y="528.8" font-size="15" textLength="197.3" lengthAdjust="spacingAndGlyphs">Dummy - Component Control</text>
<path d="M10 543L14.6 547.5L10 552" fill="none" stroke="#a6a6a6" stroke-width="1.3"/>
<g transform="translate(27 539)">
<path d="M0.5 0.5H7.3L10.5 3.7V13.5H0.5Z" fill="#eef2fa" stroke="url(#docg)" stroke-width="1"/>
<path d="M7.3 0.5V3.7H10.5Z" fill="#e9d39a" stroke="#c9b27a" stroke-width="0.6"/>
<rect x="2.2" y="3.2" width="3.8" height="1" fill="#5d7ab8"/>
<rect x="2.2" y="5.2" width="6.6" height="1" fill="#5d7ab8"/>
<rect x="2.2" y="7.2" width="6.6" height="1" fill="#5d7ab8"/>
<rect x="2.2" y="9.2" width="6.6" height="1" fill="#5d7ab8"/>
<rect x="2.2" y="11.2" width="4.8" height="1" fill="#5d7ab8"/>
</g>
<rect x="45" y="536" width="46" height="20" fill="#c0054f"/>
<text x="54.45" y="551.9" font-size="15" fill="#fff" textLength="27.3" lengthAdjust="spacingAndGlyphs">EHA</text>
<text x="93.85" y="551.8" font-size="15" textLength="237.7" lengthAdjust="spacingAndGlyphs">Epm - Engine Position Management</text>
<path d="M10 566L14.6 570.5L10 575" fill="none" stroke="#a6a6a6" stroke-width="1.3"/>
<g transform="translate(27 562)">
<path d="M0.5 0.5H7.3L10.5 3.7V13.5H0.5Z" fill="#eef2fa" stroke="url(#docg)" stroke-width="1"/>
<path d="M7.3 0.5V3.7H10.5Z" fill="#e9d39a" stroke="#c9b27a" stroke-width="0.6"/>
<rect x="2.2" y="3.2" width="3.8" height="1" fill="#5d7ab8"/>
<rect x="2.2" y="5.2" width="6.6" height="1" fill="#5d7ab8"/>
<rect x="2.2" y="7.2" width="6.6" height="1" fill="#5d7ab8"/>
<rect x="2.2" y="9.2" width="6.6" height="1" fill="#5d7ab8"/>
<rect x="2.2" y="11.2" width="4.8" height="1" fill="#5d7ab8"/>
</g>
<rect x="45" y="559" width="46" height="20" fill="#0a7fc5"/>
<text x="54.45" y="574.9" font-size="15" fill="#fff" textLength="27.3" lengthAdjust="spacingAndGlyphs">EH1</text>
<text x="93.85" y="574.8" font-size="15" textLength="183.4" lengthAdjust="spacingAndGlyphs">Fmc - Fuel Mass Calculation</text>
<path d="M10 589L14.6 593.5L10 598" fill="none" stroke="#a6a6a6" stroke-width="1.3"/>
<g transform="translate(27 585)">
<path d="M0.5 0.5H7.3L10.5 3.7V13.5H0.5Z" fill="#eef2fa" stroke="url(#docg)" stroke-width="1"/>
<path d="M7.3 0.5V3.7H10.5Z" fill="#e9d39a" stroke="#c9b27a" stroke-width="0.6"/>
<rect x="2.2" y="3.2" width="3.8" height="1" fill="#5d7ab8"/>
<rect x="2.2" y="5.2" width="6.6" height="1" fill="#5d7ab8"/>
<rect x="2.2" y="7.2" width="6.6" height="1" fill="#5d7ab8"/>
<rect x="2.2" y="9.2" width="6.6" height="1" fill="#5d7ab8"/>
<rect x="2.2" y="11.2" width="4.8" height="1" fill="#5d7ab8"/>
</g>
<rect x="45" y="582" width="46" height="20" fill="#0a7fc5"/>
<text x="54.45" y="597.9" font-size="15" fill="#fff" textLength="27.3" lengthAdjust="spacingAndGlyphs">EH1</text>
<text x="93.85" y="597.8" font-size="15" textLength="205.9" lengthAdjust="spacingAndGlyphs">Iac - Ignition Angle Calculation</text>
<path d="M10 612L14.6 616.5L10 621" fill="none" stroke="#a6a6a6" stroke-width="1.3"/>
<g transform="translate(27 608)">
<path d="M0.5 0.5H7.3L10.5 3.7V13.5H0.5Z" fill="#eef2fa" stroke="url(#docg)" stroke-width="1"/>
<path d="M7.3 0.5V3.7H10.5Z" fill="#e9d39a" stroke="#c9b27a" stroke-width="0.6"/>
<rect x="2.2" y="3.2" width="3.8" height="1" fill="#5d7ab8"/>
<rect x="2.2" y="5.2" width="6.6" height="1" fill="#5d7ab8"/>
<rect x="2.2" y="7.2" width="6.6" height="1" fill="#5d7ab8"/>
<rect x="2.2" y="9.2" width="6.6" height="1" fill="#5d7ab8"/>
<rect x="2.2" y="11.2" width="4.8" height="1" fill="#5d7ab8"/>
</g>
<rect x="45" y="605" width="46" height="20" fill="#0a7fc5"/>
<text x="54.45" y="620.9" font-size="15" fill="#fff" textLength="27.3" lengthAdjust="spacingAndGlyphs">EH1</text>
<text x="93.85" y="620.8" font-size="15" textLength="188.7" lengthAdjust="spacingAndGlyphs">Icc - Inter Cooler Calculation</text>
<path d="M10 635L14.6 639.5L10 644" fill="none" stroke="#a6a6a6" stroke-width="1.3"/>
<g transform="translate(27 631)">
<path d="M0.5 0.5H7.3L10.5 3.7V13.5H0.5Z" fill="#eef2fa" stroke="url(#docg)" stroke-width="1"/>
<path d="M7.3 0.5V3.7H10.5Z" fill="#e9d39a" stroke="#c9b27a" stroke-width="0.6"/>
<rect x="2.2" y="3.2" width="3.8" height="1" fill="#5d7ab8"/>
<rect x="2.2" y="5.2" width="6.6" height="1" fill="#5d7ab8"/>
<rect x="2.2" y="7.2" width="6.6" height="1" fill="#5d7ab8"/>
<rect x="2.2" y="9.2" width="6.6" height="1" fill="#5d7ab8"/>
<rect x="2.2" y="11.2" width="4.8" height="1" fill="#5d7ab8"/>
</g>
<rect x="45" y="628" width="46" height="20" fill="#0a7fc5"/>
<text x="54.45" y="643.9" font-size="15" fill="#fff" textLength="27.3" lengthAdjust="spacingAndGlyphs">EH1</text>
<text x="93.85" y="643.8" font-size="15" textLength="155.2" lengthAdjust="spacingAndGlyphs">Isc - Idle Speed Control</text>
<path d="M10 658L14.6 662.5L10 667" fill="none" stroke="#a6a6a6" stroke-width="1.3"/>
<g transform="translate(27 654)">
<path d="M0.5 0.5H7.3L10.5 3.7V13.5H0.5Z" fill="#eef2fa" stroke="url(#docg)" stroke-width="1"/>
<path d="M7.3 0.5V3.7H10.5Z" fill="#e9d39a" stroke="#c9b27a" stroke-width="0.6"/>
<rect x="2.2" y="3.2" width="3.8" height="1" fill="#5d7ab8"/>
<rect x="2.2" y="5.2" width="6.6" height="1" fill="#5d7ab8"/>
<rect x="2.2" y="7.2" width="6.6" height="1" fill="#5d7ab8"/>
<rect x="2.2" y="9.2" width="6.6" height="1" fill="#5d7ab8"/>
<rect x="2.2" y="11.2" width="4.8" height="1" fill="#5d7ab8"/>
</g>
<rect x="45" y="651" width="46" height="20" fill="#0a7fc5"/>
<text x="54.45" y="666.9" font-size="15" fill="#fff" textLength="27.3" lengthAdjust="spacingAndGlyphs">EH1</text>
<text x="93.85" y="666.8" font-size="15" textLength="202.4" lengthAdjust="spacingAndGlyphs">Itc - Injection Time Calculation</text>
<path d="M10 681L14.6 685.5L10 690" fill="none" stroke="#a6a6a6" stroke-width="1.3"/>
<g transform="translate(27 677)">
<path d="M0.5 0.5H7.3L10.5 3.7V13.5H0.5Z" fill="#eef2fa" stroke="url(#docg)" stroke-width="1"/>
<path d="M7.3 0.5V3.7H10.5Z" fill="#e9d39a" stroke="#c9b27a" stroke-width="0.6"/>
<rect x="2.2" y="3.2" width="3.8" height="1" fill="#5d7ab8"/>
<rect x="2.2" y="5.2" width="6.6" height="1" fill="#5d7ab8"/>
<rect x="2.2" y="7.2" width="6.6" height="1" fill="#5d7ab8"/>
<rect x="2.2" y="9.2" width="6.6" height="1" fill="#5d7ab8"/>
<rect x="2.2" y="11.2" width="4.8" height="1" fill="#5d7ab8"/>
</g>
<rect x="45" y="674" width="46" height="20" fill="#0a2f7f"/>
<text x="54.45" y="689.9" font-size="15" fill="#fff" textLength="27.3" lengthAdjust="spacingAndGlyphs">EH2</text>
<text x="93.85" y="689.8" font-size="15" textLength="240.4" lengthAdjust="spacingAndGlyphs">Lcc - Lambda Correction Calculation</text>
<path d="M10 704L14.6 708.5L10 713" fill="none" stroke="#a6a6a6" stroke-width="1.3"/>
<g transform="translate(27 700)">
<path d="M0.5 0.5H7.3L10.5 3.7V13.5H0.5Z" fill="#eef2fa" stroke="url(#docg)" stroke-width="1"/>
<path d="M7.3 0.5V3.7H10.5Z" fill="#e9d39a" stroke="#c9b27a" stroke-width="0.6"/>
<rect x="2.2" y="3.2" width="3.8" height="1" fill="#5d7ab8"/>
<rect x="2.2" y="5.2" width="6.6" height="1" fill="#5d7ab8"/>
<rect x="2.2" y="7.2" width="6.6" height="1" fill="#5d7ab8"/>
<rect x="2.2" y="9.2" width="6.6" height="1" fill="#5d7ab8"/>
<rect x="2.2" y="11.2" width="4.8" height="1" fill="#5d7ab8"/>
</g>
<rect x="45" y="697" width="46" height="20" fill="#0a2f7f"/>
<text x="54.45" y="712.9" font-size="15" fill="#fff" textLength="27.3" lengthAdjust="spacingAndGlyphs">EH2</text>
<text x="93.85" y="712.8" font-size="15" textLength="157.7" lengthAdjust="spacingAndGlyphs">Opm - Operation Mode</text>
<path d="M10 727L14.6 731.5L10 736" fill="none" stroke="#a6a6a6" stroke-width="1.3"/>
<g transform="translate(27 723)">
<path d="M0.5 0.5H7.3L10.5 3.7V13.5H0.5Z" fill="#eef2fa" stroke="url(#docg)" stroke-width="1"/>
<path d="M7.3 0.5V3.7H10.5Z" fill="#e9d39a" stroke="#c9b27a" stroke-width="0.6"/>
<rect x="2.2" y="3.2" width="3.8" height="1" fill="#5d7ab8"/>
<rect x="2.2" y="5.2" width="6.6" height="1" fill="#5d7ab8"/>
<rect x="2.2" y="7.2" width="6.6" height="1" fill="#5d7ab8"/>
<rect x="2.2" y="9.2" width="6.6" height="1" fill="#5d7ab8"/>
<rect x="2.2" y="11.2" width="4.8" height="1" fill="#5d7ab8"/>
</g>
<rect x="45" y="720" width="46" height="20" fill="#0a2f7f"/>
<text x="54.45" y="735.9" font-size="15" fill="#fff" textLength="27.3" lengthAdjust="spacingAndGlyphs">EH2</text>
<text x="93.85" y="735.8" font-size="15" textLength="219.6" lengthAdjust="spacingAndGlyphs">Sensors - Sensor Value Treatment</text>
<path d="M10 750L14.6 754.5L10 759" fill="none" stroke="#a6a6a6" stroke-width="1.3"/>
<g transform="translate(27 746)">
<path d="M0.5 0.5H7.3L10.5 3.7V13.5H0.5Z" fill="#eef2fa" stroke="url(#docg)" stroke-width="1"/>
<path d="M7.3 0.5V3.7H10.5Z" fill="#e9d39a" stroke="#c9b27a" stroke-width="0.6"/>
<rect x="2.2" y="3.2" width="3.8" height="1" fill="#5d7ab8"/>
<rect x="2.2" y="5.2" width="6.6" height="1" fill="#5d7ab8"/>
<rect x="2.2" y="7.2" width="6.6" height="1" fill="#5d7ab8"/>
<rect x="2.2" y="9.2" width="6.6" height="1" fill="#5d7ab8"/>
<rect x="2.2" y="11.2" width="4.8" height="1" fill="#5d7ab8"/>
</g>
<rect x="45" y="743" width="46" height="20" fill="#0a2f7f"/>
<text x="54.45" y="758.9" font-size="15" fill="#fff" textLength="27.3" lengthAdjust="spacingAndGlyphs">EH2</text>
<text x="93.85" y="758.8" font-size="15" textLength="156.4" lengthAdjust="spacingAndGlyphs">Stc - Starter Calculation</text>
<path d="M10 773L14.6 777.5L10 782" fill="none" stroke="#a6a6a6" stroke-width="1.3"/>
<g transform="translate(27 769)">
<path d="M0.5 0.5H7.3L10.5 3.7V13.5H0.5Z" fill="#eef2fa" stroke="url(#docg)" stroke-width="1"/>
<path d="M7.3 0.5V3.7H10.5Z" fill="#e9d39a" stroke="#c9b27a" stroke-width="0.6"/>
<rect x="2.2" y="3.2" width="3.8" height="1" fill="#5d7ab8"/>
<rect x="2.2" y="5.2" width="6.6" height="1" fill="#5d7ab8"/>
<rect x="2.2" y="7.2" width="6.6" height="1" fill="#5d7ab8"/>
<rect x="2.2" y="9.2" width="6.6" height="1" fill="#5d7ab8"/>
<rect x="2.2" y="11.2" width="4.8" height="1" fill="#5d7ab8"/>
</g>
<rect x="45" y="766" width="46" height="20" fill="#0a2f7f"/>
<text x="54.45" y="781.9" font-size="15" fill="#fff" textLength="27.3" lengthAdjust="spacingAndGlyphs">EH2</text>
<text x="93.85" y="781.8" font-size="15" textLength="228.6" lengthAdjust="spacingAndGlyphs">T2t - Torque to throttle calculation</text>
<path d="M10 796L14.6 800.5L10 805" fill="none" stroke="#a6a6a6" stroke-width="1.3"/>
<g transform="translate(27 792)">
<path d="M0.5 0.5H7.3L10.5 3.7V13.5H0.5Z" fill="#eef2fa" stroke="url(#docg)" stroke-width="1"/>
<path d="M7.3 0.5V3.7H10.5Z" fill="#e9d39a" stroke="#c9b27a" stroke-width="0.6"/>
<rect x="2.2" y="3.2" width="3.8" height="1" fill="#5d7ab8"/>
<rect x="2.2" y="5.2" width="6.6" height="1" fill="#5d7ab8"/>
<rect x="2.2" y="7.2" width="6.6" height="1" fill="#5d7ab8"/>
<rect x="2.2" y="9.2" width="6.6" height="1" fill="#5d7ab8"/>
<rect x="2.2" y="11.2" width="4.8" height="1" fill="#5d7ab8"/>
</g>
<rect x="45" y="789" width="46" height="20" fill="#0a2f7f"/>
<text x="54.45" y="804.9" font-size="15" fill="#fff" textLength="27.3" lengthAdjust="spacingAndGlyphs">EH2</text>
<text x="93.85" y="804.8" font-size="15" textLength="145.4" lengthAdjust="spacingAndGlyphs">Tqs - Torque Structure</text>
<rect x="0" y="1003.6" width="462.5" height="353.6" fill="#fff" stroke="#c6c6c6" stroke-width="1.2"/>
<rect x="0" y="1003" width="1.4" height="354.5" fill="#c4c4c4"/>
<rect x="100.3" y="1003.6" width="362.2" height="31.8" fill="#ececec" stroke="#c6c6c6" stroke-width="1.2"/>
<g stroke="#3f7fc8" stroke-width="1.1" fill="#dce9f8">
<rect x="7.4" y="1012.6" width="4.8" height="4.8"/><rect x="7.4" y="1021.6" width="4.8" height="4.8"/><rect x="14.4" y="1018" width="2.4" height="2.4"/>
<path d="M14.4 1015H19.6M17.6 1019.2H19.8M14.4 1024H19.6" fill="none"/>
</g>
<text x="26.07" y="1023.8" font-size="14.5" fill="#4d4d4d" font-weight="bold" textLength="51.65" lengthAdjust="spacingAndGlyphs">Outline</text>
<path d="M85.4 1015.6L93.8 1024M93.8 1015.6L85.4 1024" fill="none" stroke="#111" stroke-width="2.1"/>
<rect x="422.6" y="1010.4" width="9" height="3.4" fill="none" stroke="#505050" stroke-width="1.15"/>
<rect x="445.6" y="1010.8" width="9" height="8.6" fill="none" stroke="#505050" stroke-width="1.15"/>
<line x1="445.6" y1="1012.8" x2="454.6" y2="1012.8" stroke="#505050" stroke-width="1.1"/>
<text x="5.75" y="1056.6" font-size="15" fill="#1a1a1a" textLength="324" lengthAdjust="spacingAndGlyphs">There is no active editor that provides an outline.</text>
<rect x="2544.4" y="88.2" width="5.4" height="2.6" fill="#fff" stroke="#9a9a9a" stroke-width="0.9"/>
<rect x="2554.2" y="88.2" width="6" height="5.4" fill="#fff" stroke="#9a9a9a" stroke-width="0.9"/>
<line x1="2554.2" y1="90.2" x2="2560" y2="90.2" stroke="#9a9a9a" stroke-width="0.9"/>
<rect x="466.5" y="98.8" width="2092.6" height="864.6" fill="#fff" stroke="#c6c6c6" stroke-width="1.2"/>
<rect x="711.3" y="98.8" width="1847.8" height="31.7" fill="#ececec" stroke="#c6c6c6" stroke-width="1.2"/>
<g transform="translate(473 107)" stroke="#1c5aa0" stroke-width="1.2" fill="none">
<rect x="6" y="0.5" width="6.5" height="3.5" fill="#eef3fa"/>
<path d="M0 2.5H6M12.5 2.5H15"/>
<path d="M0 6.5H8.5V11.5M8 11.5H14"/>
<rect x="1.5" y="9.5" width="4" height="4" fill="#eef3fa"/>
<path d="M0 11.5H1.5"/>
</g>
<text x="492.27" y="118.4" font-size="14.5" fill="#4d4d4d" font-weight="bold" textLength="196.45" lengthAdjust="spacingAndGlyphs">FunctionOverviewDiagram1</text>
<path d="M696.2 110.2L705 118.6M705 110.2L696.2 118.6" fill="none" stroke="#111" stroke-width="2.1"/>
<rect x="466.5" y="967.6" width="2092.6" height="389.6" fill="#fff" stroke="#c6c6c6" stroke-width="1.2"/>
<rect x="585.3" y="967.6" width="1973.8" height="31.8" fill="#ececec" stroke="#c6c6c6" stroke-width="1.2"/>
<g transform="translate(475 976)">
<path d="M0.5 0.5H7.3L10.5 3.7V13.5H0.5Z" fill="#eef2fa" stroke="url(#docg)" stroke-width="1"/>
<path d="M7.3 0.5V3.7H10.5Z" fill="#e9d39a" stroke="#c9b27a" stroke-width="0.6"/>
<rect x="2.2" y="3.2" width="3.8" height="1" fill="#5d7ab8"/>
<rect x="2.2" y="5.2" width="6.6" height="1" fill="#5d7ab8"/>
<rect x="2.2" y="7.2" width="6.6" height="1" fill="#5d7ab8"/>
<rect x="2.2" y="9.2" width="6.6" height="1" fill="#5d7ab8"/>
<rect x="2.2" y="11.2" width="4.8" height="1" fill="#5d7ab8"/>
</g>
<rect x="492" y="975.8" width="46" height="20.2" fill="#c0054f"/>
<text x="500.43" y="992" font-size="15.4" fill="#fff" textLength="28.34" lengthAdjust="spacingAndGlyphs">EHA</text>
<text x="543.07" y="987.8" font-size="14.5" fill="#4d4d4d" font-weight="bold" textLength="21.15" lengthAdjust="spacingAndGlyphs">Afr</text>
<path d="M570.5 979.8L578.7 987.8M578.7 979.8L570.5 987.8" fill="none" stroke="#111" stroke-width="2.3"/>
<rect x="2539.4" y="1000.2" width="19" height="337" fill="#f1f1f1"/>
<polygon points="2544,1014 2554.4,1014 2549.2,1009.2" fill="#4a4a4a"/>
<polygon points="2544,1323 2554.4,1323 2549.2,1327.8" fill="#4a4a4a"/>
<rect x="2541.2" y="1045" width="16.6" height="20.8" fill="#c1c1c1"/>
<rect x="467.2" y="1337.2" width="2072.2" height="19.4" fill="#f1f1f1"/>
<rect x="2539.4" y="1337.2" width="19" height="19.4" fill="#e8e8e8"/>
<polygon points="480.4,1342.2 480.4,1352.6 475,1347.4" fill="#9a9a9a"/>
<polygon points="2525.4,1342.2 2525.4,1352.6 2531,1347.4" fill="#4a4a4a"/>
<rect x="488.2" y="1339.2" width="1854.6" height="16.5" fill="#c1c1c1"/>
<text x="502.48" y="1025" font-size="22.4" fill="#1c4f9c" class="hd" textLength="364.94" lengthAdjust="spacingAndGlyphs">1.2 [Luft-Kraftstoff-Verhältnis]</text>
<g class="bd">
<text y="1065.5" font-size="17.3"><tspan x="501.74" textLength="22.13" lengthAdjust="spacingAndGlyphs">Im</tspan> <tspan x="528.13" textLength="46.73" lengthAdjust="spacingAndGlyphs">Modul</tspan> <tspan x="580.13" textLength="188.73" lengthAdjust="spacingAndGlyphs">Luft-Kraftstoff-Verhältnis</tspan> <tspan x="773.74" textLength="106.13" lengthAdjust="spacingAndGlyphs">(AirFuelRatio)</tspan> <tspan x="884.13" textLength="34.73" lengthAdjust="spacingAndGlyphs">wird</tspan> <tspan x="923.13" textLength="25.73" lengthAdjust="spacingAndGlyphs">auf</tspan> <tspan x="953.13" textLength="39.73" lengthAdjust="spacingAndGlyphs">Basis</tspan> <tspan x="997.13" textLength="41.33" lengthAdjust="spacingAndGlyphs">eines</tspan> <tspan x="1043.13" textLength="110.73" lengthAdjust="spacingAndGlyphs">vorgegebenen</tspan> <tspan x="1158.13" textLength="113.73" lengthAdjust="spacingAndGlyphs">Lambdawertes</tspan> <tspan x="1276.13" textLength="27.73" lengthAdjust="spacingAndGlyphs">das</tspan> <tspan x="1308.13" textLength="73.73" lengthAdjust="spacingAndGlyphs">benötigte</tspan> <tspan x="1386.13" textLength="77.13" lengthAdjust="spacingAndGlyphs">Verhältnis</tspan></text>
<text y="1087.55" font-size="17.3"><tspan x="501.74" textLength="28.13" lengthAdjust="spacingAndGlyphs">von</tspan> <tspan x="535.13" textLength="30.73" lengthAdjust="spacingAndGlyphs">Luft</tspan> <tspan x="570.13" textLength="17.73" lengthAdjust="spacingAndGlyphs">zu</tspan> <tspan x="593.13" textLength="72.73" lengthAdjust="spacingAndGlyphs">Kraftstoff</tspan> <tspan x="670.13" textLength="82.73" lengthAdjust="spacingAndGlyphs">berechnet.</tspan> <tspan x="757.74" textLength="39.13" lengthAdjust="spacingAndGlyphs">Dazu</tspan> <tspan x="802.13" textLength="33.73" lengthAdjust="spacingAndGlyphs">wird</tspan> <tspan x="840.13" textLength="35.73" lengthAdjust="spacingAndGlyphs">über</tspan> <tspan x="880.13" textLength="27.73" lengthAdjust="spacingAndGlyphs">das</tspan> <tspan x="912.13" textLength="67.73" lengthAdjust="spacingAndGlyphs">Kennfeld</tspan> <tspan x="985.65" textLength="413.09" lengthAdjust="spacingAndGlyphs" class="mn" fill="#3d5ea6">Afr_rpmEngSpdfacRelAir2facLambdaReqBase_MAP</tspan> <tspan x="1404.13" textLength="27.73" lengthAdjust="spacingAndGlyphs">aus</tspan> <tspan x="1436.13" textLength="26.73" lengthAdjust="spacingAndGlyphs">der</tspan></text>
<text y="1109.6" font-size="17.3"><tspan x="501.74" textLength="69.13" lengthAdjust="spacingAndGlyphs">Drehzahl</tspan> <tspan x="575.95" textLength="124.39" lengthAdjust="spacingAndGlyphs" class="mn" fill="#3d5ea6">Epm_rpmEngSpd</tspan> <tspan x="705.13" textLength="29.73" lengthAdjust="spacingAndGlyphs">und</tspan> <tspan x="740.13" textLength="25.73" lengthAdjust="spacingAndGlyphs">der</tspan> <tspan x="770.74" textLength="66.13" lengthAdjust="spacingAndGlyphs">relativen</tspan> <tspan x="842.13" textLength="56.73" lengthAdjust="spacingAndGlyphs">Füllung</tspan> <tspan x="904.25" textLength="125.09" lengthAdjust="spacingAndGlyphs" class="mn" fill="#3d5ea6">Amf_facRelAir</tspan> <tspan x="1034.13" textLength="24.33" lengthAdjust="spacingAndGlyphs">ein</tspan> <tspan x="1063.13" textLength="73.73" lengthAdjust="spacingAndGlyphs">Basiswert</tspan> <tspan x="1142.13" textLength="22.73" lengthAdjust="spacingAndGlyphs">für</tspan> <tspan x="1169.13" textLength="61.73" lengthAdjust="spacingAndGlyphs">Lambda</tspan> <tspan x="1235.13" textLength="66.73" lengthAdjust="spacingAndGlyphs">ermittelt</tspan> <tspan x="1306.54" textLength="29.33" lengthAdjust="spacingAndGlyphs">und</tspan> <tspan x="1340.54" textLength="101.33" lengthAdjust="spacingAndGlyphs">anschließend</tspan> <tspan x="1446.13" textLength="25.73" lengthAdjust="spacingAndGlyphs">mit</tspan></text>
<text y="1131.65" font-size="17.3"><tspan x="501.74" textLength="91.13" lengthAdjust="spacingAndGlyphs">Korrekturen</tspan> <tspan x="597.53" textLength="103.33" lengthAdjust="spacingAndGlyphs">beaufschlagt.</tspan> <tspan x="706.13" textLength="25.73" lengthAdjust="spacingAndGlyphs">Die</tspan> <tspan x="736.53" textLength="167.33" lengthAdjust="spacingAndGlyphs">Grundparametrierung</tspan> <tspan x="908.13" textLength="27.73" lengthAdjust="spacingAndGlyphs">aus</tspan> <tspan x="940.53" textLength="76.33" lengthAdjust="spacingAndGlyphs">Erfahrung</tspan> <tspan x="1021.13" textLength="53.33" lengthAdjust="spacingAndGlyphs">heraus</tspan> <tspan x="1079.13" textLength="33.73" lengthAdjust="spacingAndGlyphs">liegt</tspan> <tspan x="1117.13" textLength="29.33" lengthAdjust="spacingAndGlyphs">hier</tspan> <tspan x="1152.13" textLength="35.73" lengthAdjust="spacingAndGlyphs">über</tspan> <tspan x="1192.13" textLength="27.73" lengthAdjust="spacingAndGlyphs">alle</tspan> <tspan x="1224.54" textLength="133.93" lengthAdjust="spacingAndGlyphs">Drehzahlbereiche</tspan> <tspan x="1363.13" textLength="18.73" lengthAdjust="spacingAndGlyphs">im</tspan></text>
<text y="1153.7" font-size="17.3"><tspan x="501.74" textLength="115.13" lengthAdjust="spacingAndGlyphs">Teillastbereich,</tspan> <tspan x="621.13" textLength="15.73" lengthAdjust="spacingAndGlyphs">d.</tspan> <tspan x="642.13" textLength="14.73" lengthAdjust="spacingAndGlyphs">h.</tspan> <tspan x="662.13" textLength="23.73" lengthAdjust="spacingAndGlyphs">bei</tspan> <tspan x="690.13" textLength="66.73" lengthAdjust="spacingAndGlyphs">relativen</tspan> <tspan x="762.13" textLength="74.73" lengthAdjust="spacingAndGlyphs">Füllungen</tspan> <tspan x="842.13" textLength="41.73" lengthAdjust="spacingAndGlyphs">unter</tspan> <tspan x="888.13" textLength="38.73" lengthAdjust="spacingAndGlyphs">80%,</tspan> <tspan x="931.13" textLength="23.73" lengthAdjust="spacingAndGlyphs">bei</tspan> <tspan x="964.13" textLength="20.73" lengthAdjust="spacingAndGlyphs">λ=</tspan> <tspan x="991.53" textLength="24.93" lengthAdjust="spacingAndGlyphs">1.0</tspan> <tspan x="1021.13" textLength="29.73" lengthAdjust="spacingAndGlyphs">und</tspan> <tspan x="1055.54" textLength="19.33" lengthAdjust="spacingAndGlyphs">im</tspan> <tspan x="1079.13" textLength="111.73" lengthAdjust="spacingAndGlyphs">Volllastbereich</tspan> <tspan x="1195.54" textLength="35.73" lengthAdjust="spacingAndGlyphs">über</tspan> <tspan x="1236.13" textLength="46.73" lengthAdjust="spacingAndGlyphs">120%</tspan> <tspan x="1287.13" textLength="24.13" lengthAdjust="spacingAndGlyphs">bei</tspan> <tspan x="1315.13" textLength="22.13" lengthAdjust="spacingAndGlyphs">λ=</tspan> <tspan x="1342.54" textLength="28.33" lengthAdjust="spacingAndGlyphs">0.7.</tspan> <tspan x="1375.54" textLength="22.33" lengthAdjust="spacingAndGlyphs">Im</tspan></text>
<text y="1175.75" font-size="17.3"><tspan x="501.74" textLength="139.13" lengthAdjust="spacingAndGlyphs">Übergangsbereich</tspan> <tspan x="645.53" textLength="89.33" lengthAdjust="spacingAndGlyphs">dazwischen</tspan> <tspan x="739.13" textLength="45.73" lengthAdjust="spacingAndGlyphs">findet</tspan> <tspan x="789.13" textLength="32.73" lengthAdjust="spacingAndGlyphs">eine</tspan> <tspan x="826.53" textLength="52.73" lengthAdjust="spacingAndGlyphs">lineare</tspan> <tspan x="883.74" textLength="99.13" lengthAdjust="spacingAndGlyphs">Interpolation</tspan> <tspan x="988.13" textLength="40.33" lengthAdjust="spacingAndGlyphs">statt.</tspan></text>
<text y="1214.7" font-size="17.3"><tspan x="501.74" textLength="72.13" lengthAdjust="spacingAndGlyphs">Korrigiert</tspan> <tspan x="578.13" textLength="33.73" lengthAdjust="spacingAndGlyphs">wird</tspan> <tspan x="616.53" textLength="33.33" lengthAdjust="spacingAndGlyphs">zum</tspan> <tspan x="654.13" textLength="42.73" lengthAdjust="spacingAndGlyphs">einen</tspan> <tspan x="701.13" textLength="72.73" lengthAdjust="spacingAndGlyphs">abhängig</tspan> <tspan x="778.13" textLength="27.73" lengthAdjust="spacingAndGlyphs">von</tspan> <tspan x="810.74" textLength="26.13" lengthAdjust="spacingAndGlyphs">der</tspan> <tspan x="841.74" textLength="163.73" lengthAdjust="spacingAndGlyphs">Kühlmitteltemperatur</tspan> <tspan x="1010.13" textLength="88.73" lengthAdjust="spacingAndGlyphs">Ctc_atCool,</tspan> <tspan x="1103.13" textLength="24.73" lengthAdjust="spacingAndGlyphs">die</tspan> <tspan x="1132.13" textLength="36.13" lengthAdjust="spacingAndGlyphs">über</tspan> <tspan x="1172.54" textLength="24.33" lengthAdjust="spacingAndGlyphs">die</tspan> <tspan x="1201.13" textLength="70.73" lengthAdjust="spacingAndGlyphs">Kennlinie</tspan></text>
<text y="1236.75" font-size="17.3"><tspan x="502.25" textLength="298.09" lengthAdjust="spacingAndGlyphs" class="mn" fill="#3d5ea6">Afr_atCool2facLambdaReqCorr_CUR</tspan> <tspan x="805.13" textLength="100.73" lengthAdjust="spacingAndGlyphs">eingerechnet</tspan> <tspan x="910.74" textLength="39.13" lengthAdjust="spacingAndGlyphs">wird.</tspan> <tspan x="954.53" textLength="24.93" lengthAdjust="spacingAndGlyphs">Bei</tspan> <tspan x="984.13" textLength="52.33" lengthAdjust="spacingAndGlyphs">kaltem</tspan> <tspan x="1041.13" textLength="45.73" lengthAdjust="spacingAndGlyphs">Motor</tspan> <tspan x="1091.13" textLength="45.13" lengthAdjust="spacingAndGlyphs">findet</tspan> <tspan x="1140.54" textLength="33.33" lengthAdjust="spacingAndGlyphs">eine</tspan> <tspan x="1178.13" textLength="139.73" lengthAdjust="spacingAndGlyphs">Gemischanfettung</tspan> <tspan x="1322.54" textLength="25.33" lengthAdjust="spacingAndGlyphs">zur</tspan> <tspan x="1352.13" textLength="89.73" lengthAdjust="spacingAndGlyphs">Erwärmung</tspan> <tspan x="1446.54" textLength="27.33" lengthAdjust="spacingAndGlyphs">des</tspan></text>
<text y="1258.8" font-size="17.3"><tspan x="501.74" textLength="53.53" lengthAdjust="spacingAndGlyphs">Motors</tspan> <tspan x="559.53" textLength="39.33" lengthAdjust="spacingAndGlyphs">statt,</tspan> <tspan x="604.13" textLength="23.73" lengthAdjust="spacingAndGlyphs">die</tspan> <tspan x="632.74" textLength="20.13" lengthAdjust="spacingAndGlyphs">ab</tspan> <tspan x="657.53" textLength="35.93" lengthAdjust="spacingAndGlyphs">rund</tspan> <tspan x="698.13" textLength="38.73" lengthAdjust="spacingAndGlyphs">50°C</tspan> <tspan x="741.53" textLength="17.73" lengthAdjust="spacingAndGlyphs">zu</tspan> <tspan x="764.13" textLength="30.13" lengthAdjust="spacingAndGlyphs">Null</tspan> <tspan x="799.13" textLength="39.13" lengthAdjust="spacingAndGlyphs">wird.</tspan> <tspan x="843.13" textLength="34.73" lengthAdjust="spacingAndGlyphs">Zum</tspan> <tspan x="882.53" textLength="64.33" lengthAdjust="spacingAndGlyphs">anderen</tspan> <tspan x="951.53" textLength="37.73" lengthAdjust="spacingAndGlyphs">kann</tspan> <tspan x="994.13" textLength="33.33" lengthAdjust="spacingAndGlyphs">eine</tspan> <tspan x="1032.13" textLength="236.73" lengthAdjust="spacingAndGlyphs">Frischlufttemperaturabhängige</tspan> <tspan x="1273.13" textLength="6.73" lengthAdjust="spacingAndGlyphs">(</tspan> <tspan x="1280.05" textLength="95.69" lengthAdjust="spacingAndGlyphs" class="mn" fill="#3d5ea6">Mtc_atMani</tspan> <tspan x="1381.54" textLength="36.33" lengthAdjust="spacingAndGlyphs">über</tspan></text>
<text y="1280.85" font-size="17.3"><tspan x="502.25" textLength="298.09" lengthAdjust="spacingAndGlyphs" class="mn" fill="#3d5ea6">Afr_atMani2facLambdaReqCorr_CUR</tspan> <tspan x="805.13" textLength="7.73" lengthAdjust="spacingAndGlyphs">)</tspan> <tspan x="817.53" textLength="76.33" lengthAdjust="spacingAndGlyphs">Anfettung</tspan> <tspan x="898.53" textLength="35.33" lengthAdjust="spacingAndGlyphs">oder</tspan> <tspan x="938.53" textLength="99.33" lengthAdjust="spacingAndGlyphs">Abmagerung</tspan> <tspan x="1042.54" textLength="82.33" lengthAdjust="spacingAndGlyphs">durchführt</tspan> <tspan x="1129.13" textLength="62.73" lengthAdjust="spacingAndGlyphs">werden.</tspan> <tspan x="1196.54" textLength="51.33" lengthAdjust="spacingAndGlyphs">Dieses</tspan> <tspan x="1252.13" textLength="67.73" lengthAdjust="spacingAndGlyphs">Kennfeld</tspan> <tspan x="1324.54" textLength="18.33" lengthAdjust="spacingAndGlyphs">ist</tspan> <tspan x="1347.54" textLength="28.33" lengthAdjust="spacingAndGlyphs">von</tspan> <tspan x="1380.54" textLength="48.33" lengthAdjust="spacingAndGlyphs">Grund</tspan> <tspan x="1433.13" textLength="25.73" lengthAdjust="spacingAndGlyphs">auf</tspan> <tspan x="1463.54" textLength="25.33" lengthAdjust="spacingAndGlyphs">mit</tspan></text>
<text y="1302.9" font-size="17.3"><tspan x="501.74" textLength="30.13" lengthAdjust="spacingAndGlyphs">Null</tspan> <tspan x="536.53" textLength="64.33" lengthAdjust="spacingAndGlyphs">bedatet.</tspan> <tspan x="606.13" textLength="27.73" lengthAdjust="spacingAndGlyphs">Der</tspan> <tspan x="638.53" textLength="18.33" lengthAdjust="spacingAndGlyphs">so</tspan> <tspan x="661.53" textLength="84.33" lengthAdjust="spacingAndGlyphs">errechnete</tspan> <tspan x="750.13" textLength="95.73" lengthAdjust="spacingAndGlyphs">Lambdawert</tspan> <tspan x="850.74" textLength="37.73" lengthAdjust="spacingAndGlyphs">kann</tspan> <tspan x="893.13" textLength="43.73" lengthAdjust="spacingAndGlyphs">durch</tspan> <tspan x="942.13" textLength="50.73" lengthAdjust="spacingAndGlyphs">setzen</tspan> <tspan x="997.13" textLength="27.73" lengthAdjust="spacingAndGlyphs">des</tspan> <tspan x="1029.54" textLength="41.33" lengthAdjust="spacingAndGlyphs">Flags</tspan> <tspan x="1075.65" textLength="230.69" lengthAdjust="spacingAndGlyphs" class="mn" fill="#3d5ea6">Afr_flgLambdaReqOverride</tspan> <tspan x="1311.73" textLength="61.13" lengthAdjust="spacingAndGlyphs">manuell</tspan> <tspan x="1377.54" textLength="25.73" lengthAdjust="spacingAndGlyphs">mit</tspan></text>
<text y="1324.95" font-size="17.3"><tspan x="502.25" textLength="182.69" lengthAdjust="spacingAndGlyphs" class="mn" fill="#3d5ea6">Afr_facLambdaReqMan</tspan> <tspan x="690.13" textLength="109.13" lengthAdjust="spacingAndGlyphs">überschrieben</tspan> <tspan x="804.13" textLength="63.13" lengthAdjust="spacingAndGlyphs">werden,</tspan> <tspan x="872.13" textLength="44.73" lengthAdjust="spacingAndGlyphs">bevor</tspan> <tspan x="921.53" textLength="15.33" lengthAdjust="spacingAndGlyphs">er</tspan> <tspan x="941.13" textLength="22.73" lengthAdjust="spacingAndGlyphs">als</tspan> <tspan x="968.53" textLength="73.33" lengthAdjust="spacingAndGlyphs">Nachricht</tspan> <tspan x="1046.54" textLength="75.33" lengthAdjust="spacingAndGlyphs">exportiert</tspan> <tspan x="1126.54" textLength="39.33" lengthAdjust="spacingAndGlyphs">wird.</tspan> <tspan x="1170.13" textLength="76.13" lengthAdjust="spacingAndGlyphs">Gleichung</tspan> <tspan x="1251.13" textLength="24.73" lengthAdjust="spacingAndGlyphs">5.7</tspan> <tspan x="1280.54" textLength="37.33" lengthAdjust="spacingAndGlyphs">zeigt</tspan> <tspan x="1322.54" textLength="24.33" lengthAdjust="spacingAndGlyphs">die</tspan> <tspan x="1351.73" textLength="111.13" lengthAdjust="spacingAndGlyphs">Berechnungen</tspan></text>
<clipPath id="cl"><rect x="467" y="1000" width="2072" height="337.2"/></clipPath>
<text x="501.74" y="1346.5" font-size="17.3" textLength="161.13" lengthAdjust="spacingAndGlyphs" clip-path="url(#cl)">noch einmal komplett.</text>
</g>
<rect x="0" y="1358" width="2560" height="32" fill="#fff"/>
<line x1="0" y1="1357.6" x2="2560" y2="1357.6" stroke="#d9d9d9" stroke-width="1"/>
<text x="8.05" y="1379.8" font-size="15" fill="#3a3a3a" textLength="228" lengthAdjust="spacingAndGlyphs">EHANDBOOK_NAVIGATOR License</text>
<rect x="246" y="1367" width="1.6" height="1.6" fill="#c4c4c4"/>
<rect x="246" y="1371.67" width="1.6" height="1.6" fill="#c4c4c4"/>
<rect x="246" y="1376.33" width="1.6" height="1.6" fill="#c4c4c4"/>
<rect x="246" y="1381" width="1.6" height="1.6" fill="#c4c4c4"/>
<text x="252.25" y="1379.8" font-size="15" fill="#3a3a3a" textLength="84.1" lengthAdjust="spacingAndGlyphs">Data Source:</text>
<rect x="341.6" y="1363.6" width="252" height="20.8" fill="#fff" stroke="#9a9a9a" stroke-width="1.2"/>
<text x="344.65" y="1380.4" font-size="15" fill="#111" textLength="153.3" lengthAdjust="spacingAndGlyphs">INCA Experiment (Live)</text>
<polygon points="578.8,1372.2 586.2,1372.2 582.5,1376.4" fill="#111"/>
<circle cx="608.6" cy="1374.4" r="5.4" fill="none" stroke="#333" stroke-width="2.6" stroke-dasharray="2.12 2.12"/>
<circle cx="608.6" cy="1374.4" r="4.5" fill="#333"/>
<circle cx="608.6" cy="1374.4" r="1.5" fill="#fff"/>
<polygon points="622.8,1373.6 632,1368 639.2,1371.6 630,1378" fill="#5aa0e0" stroke="#2f6fb5" stroke-width="0.8"/>
<polygon points="622.8,1373.6 630,1378 630,1380 622.8,1375.6" fill="#2f6fb5"/>
<polygon points="630,1378 639.2,1371.6 639.2,1373.6 630,1380" fill="#3f82c8"/>
<rect x="628" y="1371.4" width="3" height="1.6" fill="#3fb54a"/>
<line x1="645.7" y1="1365" x2="645.7" y2="1382.8" stroke="#9a9a9a" stroke-width="1.2"/>
<g stroke="#a6a6a6" stroke-width="1.1" fill="none">
<path d="M657.2 1375V1367.6H669.6V1379.4H667.6"/>
<path d="M660.2 1369.4V1375.4M663.4 1369.4V1375.4M666.6 1369.4V1373"/>
<rect x="655.2" y="1375.4" width="12.4" height="5.4" fill="#fff"/>
<path d="M658.2 1377.4V1380.6M661.2 1377.4V1380.6M664.2 1377.4V1380.6"/>
</g>
<g stroke="#a6a6a6" stroke-width="1.1" fill="none">
<path d="M680.4 1375V1367.6H692.8V1379.4H690.8"/>
<path d="M683.4 1369.4V1375.4M686.6 1369.4V1375.4M689.8 1369.4V1373"/>
<rect x="678.4" y="1375.4" width="12.4" height="5.4" fill="#fff"/>
<path d="M681.4 1377.4V1380.6M684.4 1377.4V1380.6M687.4 1377.4V1380.6"/>
</g>
<g stroke="#a6a6a6" stroke-width="1.1" fill="none">
<path d="M703.4 1375V1367.6H715.8V1379.4H713.8"/>
<path d="M706.4 1369.4V1375.4M709.6 1369.4V1375.4M712.8 1369.4V1373"/>
<rect x="701.4" y="1375.4" width="12.4" height="5.4" fill="#fff"/>
<path d="M704.4 1377.4V1380.6M707.4 1377.4V1380.6M710.4 1377.4V1380.6"/>
</g>
<path d="M687 1374L693 1381M693 1374L687 1381" fill="none" stroke="#a4a4a4" stroke-width="1.2"/>
<rect x="701.4" y="1371" width="8" height="2.4" fill="#a6a6a6"/>
<polygon points="725.4,1369 737,1374.6 725.4,1380" fill="#b4b4b4" stroke="#9e9e9e" stroke-width="0.8"/>
<rect x="749.4" y="1369.2" width="10.8" height="10.6" fill="#e8202a" stroke="#f07078" stroke-width="1" rx="1"/>
<rect x="768" y="1367" width="1.6" height="1.6" fill="#c4c4c4"/>
<rect x="768" y="1371.67" width="1.6" height="1.6" fill="#c4c4c4"/>
<rect x="768" y="1376.33" width="1.6" height="1.6" fill="#c4c4c4"/>
<rect x="768" y="1381" width="1.6" height="1.6" fill="#c4c4c4"/>
<rect x="2414" y="1367" width="1.6" height="1.6" fill="#c4c4c4"/>
<rect x="2414" y="1371.67" width="1.6" height="1.6" fill="#c4c4c4"/>
<rect x="2414" y="1376.33" width="1.6" height="1.6" fill="#c4c4c4"/>
<rect x="2414" y="1381" width="1.6" height="1.6" fill="#c4c4c4"/>
<rect x="2421.4" y="1366.6" width="14.6" height="15.4" fill="#fafcff" stroke="#6f6a4f" stroke-width="1.2"/>
<line x1="2424" y1="1370" x2="2433.6" y2="1370" stroke="#7f9fcf" stroke-width="1"/>
<line x1="2424" y1="1372.4" x2="2433.6" y2="1372.4" stroke="#7f9fcf" stroke-width="1"/>
<line x1="2424" y1="1374.8" x2="2433.6" y2="1374.8" stroke="#7f9fcf" stroke-width="1"/>
<line x1="2424" y1="1377.2" x2="2431.6" y2="1377.2" stroke="#7f9fcf" stroke-width="1"/>
<rect x="2440.4" y="1363.4" width="22.4" height="20.6" fill="#cfe6fb" stroke="#8fc2f0" stroke-width="1"/>
<rect x="2444.6" y="1366.6" width="14.6" height="15.4" fill="#fafcff" stroke="#6f6a4f" stroke-width="1.2"/>
<rect x="2445.4" y="1367.4" width="4.6" height="13.8" fill="#7f9fcf"/>
<line x1="2452" y1="1370" x2="2457.4" y2="1370" stroke="#7f9fcf" stroke-width="1"/>
<line x1="2452" y1="1372.4" x2="2457.4" y2="1372.4" stroke="#7f9fcf" stroke-width="1"/>
<line x1="2452" y1="1374.8" x2="2457.4" y2="1374.8" stroke="#7f9fcf" stroke-width="1"/>
<line x1="2452" y1="1377.2" x2="2457.4" y2="1377.2" stroke="#7f9fcf" stroke-width="1"/>
<rect x="2467.4" y="1366.6" width="14.6" height="15.4" fill="#fafcff" stroke="#6f6a4f" stroke-width="1.2"/>
<circle cx="2476" cy="1374.4" r="2.2" fill="#dfe9f8" stroke="#2f5fa8" stroke-width="1"/>
<path d="M2472.4 1381c0-4.6 7.2-4.6 7.2 0z" fill="#5f8fd0" stroke="#2f5fa8" stroke-width="0.9"/>
<line x1="2489.8" y1="1363.6" x2="2489.8" y2="1384.4" stroke="#9a9a9a" stroke-width="1.2"/>
<line x1="2496.2" y1="1374.4" x2="2508.4" y2="1374.4" stroke="#8a8a8a" stroke-width="1.6"/>
<path d="M2518.8 1374.4H2531.2M2525 1368.2V1380.6" fill="none" stroke="#8a8a8a" stroke-width="1.6"/>
<text x="2541.27" y="1373.2" font-size="6.6" fill="#8a8a8a" textLength="16.46" lengthAdjust="spacingAndGlyphs">100</text>
<text x="2545.6" y="1381.4" font-size="8.4" fill="#8a8a8a">%</text>
<g class="dg">
<path d="M1264 362.5L2365.9 362.5Q2368.5 362.5 2368.5 365.1L2368.5 416.3Q2368.5 418.9 2371.1 418.9L2375 418.9" fill="none" stroke="#0c0c0c" stroke-width="1.25"/>
<path d="M1264 431.7L1641.3 431.7" fill="none" stroke="#0c0c0c" stroke-width="1.25"/>
<path d="M1262.6 874.2L1326.9 874.2Q1329.5 874.2 1329.5 871.6L1329.5 460Q1329.5 457.4 1332.1 457.4L1641.3 457.4" fill="none" stroke="#0c0c0c" stroke-width="1.25"/>
<path d="M1262.6 900.1L1396.4 900.1" fill="none" stroke="#0c0c0c" stroke-width="1.25"/>
<path d="M1811 444.6L2375 444.6" fill="none" stroke="#0c0c0c" stroke-width="1.25"/>
<path d="M2326 588.6L2365.9 588.6Q2368.5 588.6 2368.5 586L2368.5 472.7Q2368.5 470.1 2371.1 470.1L2375 470.1" fill="none" stroke="#0c0c0c" stroke-width="1.25"/>
<rect x="491.3" y="245.4" width="753.6" height="252.1" fill="#686868"/>
<rect x="491.3" y="245.4" width="753.6" height="1" fill="#808080"/>
<rect x="494.8" y="248.5" width="747.6" height="246.8" fill="#eab0c8"/>
<rect x="1242.4" y="248.5" width="1.5" height="247" fill="#b9b9b9"/>
<rect x="1243.9" y="245.4" width="1" height="252.1" fill="#0a0a0a"/>
<rect x="491.3" y="495.3" width="753.6" height="2.2" fill="#0a0a0a"/>
<rect x="1242.4" y="248.5" width="1.5" height="247" fill="#b9b9b9"/>
<rect x="1243.9" y="245.4" width="1" height="252.1" fill="#0a0a0a"/>
<polygon points="1244.2,355.9 1255.5,355.9 1262.5,362.5 1255.5,369.1 1244.2,369.1" fill="#fff" stroke="#454545" stroke-width="1"/>
<rect x="1245.5" y="358.4" width="8.5" height="8.2" fill="url(#org)" stroke="#f08a6a" stroke-width="0.5"/>
<polygon points="1244.2,425.1 1255.5,425.1 1262.5,431.7 1255.5,438.3 1244.2,438.3" fill="#fff" stroke="#454545" stroke-width="1"/>
<rect x="1245.5" y="427.6" width="8.5" height="8.2" fill="url(#org)" stroke="#f08a6a" stroke-width="0.5"/>
<path d="M545 294.4L565.8 294.4Q568.4 294.4 568.4 297L568.4 319.7Q568.4 322.3 571 322.3L637 322.3" fill="none" stroke="#170f13" stroke-width="1.25"/>
<polygon points="637,322.3 633.9,324.6 633.9,320" fill="#000"/>
<path d="M545 335.4L637 335.4" fill="none" stroke="#170f13" stroke-width="1.25"/>
<polygon points="637,335.4 633.9,337.7 633.9,333.1" fill="#000"/>
<path d="M665 328.75L788 328.75" fill="none" stroke="#170f13" stroke-width="1.25"/>
<polygon points="788,328.75 784.9,331.05 784.9,326.45" fill="#000"/>
<path d="M802 328.75L867.5 328.75" fill="none" stroke="#170f13" stroke-width="1.25"/>
<polygon points="867.5,328.75 864.4,331.05 864.4,326.45" fill="#000"/>
<path d="M881.6 328.75L923 328.75" fill="none" stroke="#170f13" stroke-width="1.25"/>
<polygon points="923,328.75 919.9,331.05 919.9,326.45" fill="#000"/>
<path d="M943 328.75L1004.5 328.75" fill="none" stroke="#170f13" stroke-width="1.25"/>
<polygon points="1004.5,328.75 1001.4,331.05 1001.4,326.45" fill="#000"/>
<path d="M1018.6 328.75L1053.6 328.75" fill="none" stroke="#170f13" stroke-width="1.25"/>
<polygon points="1053.6,328.75 1050.5,331.05 1050.5,326.45" fill="#000"/>
<path d="M1073.6 328.75L1116.1 328.75Q1118.7 328.75 1118.7 331.35L1118.7 354.2Q1118.7 356.8 1121.3 356.8L1129.4 356.8" fill="none" stroke="#170f13" stroke-width="1.25"/>
<polygon points="1129.4,356.8 1126.3,359.1 1126.3,354.5" fill="#000"/>
<path d="M545 395.4L637 395.4" fill="none" stroke="#170f13" stroke-width="1.25"/>
<polygon points="637,395.4 633.9,397.7 633.9,393.1" fill="#000"/>
<path d="M665 395.4L793.8 395.4Q796.4 395.4 796.4 392.8L796.4 335.9" fill="none" stroke="#170f13" stroke-width="1.25"/>
<polygon points="796.4,335.9 798.7,339 794.1,339" fill="#000"/>
<path d="M663 445.6L781 445.6" fill="none" stroke="#170f13" stroke-width="1.25"/>
<polygon points="781,445.6 777.9,447.9 777.9,443.3" fill="#000"/>
<path d="M809 445.6L873 445.6Q875.6 445.6 875.6 443L875.6 335.9" fill="none" stroke="#170f13" stroke-width="1.25"/>
<polygon points="875.6,335.9 877.9,339 873.3,339" fill="#000"/>
<path d="M944 267L991.2 267Q993.8 267 993.8 269.6L993.8 388.4Q993.8 391 996.4 391L1010 391Q1012.6 391 1012.6 388.4L1012.6 336" fill="none" stroke="#170f13" stroke-width="1.25"/>
<polygon points="1012.6,336 1014.9,339.1 1010.3,339.1" fill="#000"/>
<path d="M987.1 328.75L987.1 423.1Q987.1 425.7 989.7 425.7L1005 425.7" fill="none" stroke="#170f13" stroke-width="1.25"/>
<polygon points="1005,425.7 1001.9,428 1001.9,423.4" fill="#000"/>
<path d="M949.8 397.6L1010.7 397.6Q1013.3 397.6 1013.3 400.2L1013.3 421.6" fill="none" stroke="#170f13" stroke-width="1.25" stroke-dasharray="4.2 2.6"/>
<polygon points="1013.3,421.6 1011,418.5 1015.6,418.5" fill="#000"/>
<path d="M944.4 438.6L1005 438.6" fill="none" stroke="#170f13" stroke-width="1.25"/>
<polygon points="1005,438.6 1001.9,440.9 1001.9,436.3" fill="#000"/>
<path d="M1018.6 431.7L1054 431.7" fill="none" stroke="#170f13" stroke-width="1.25"/>
<polygon points="1054,431.7 1050.9,434 1050.9,429.4" fill="#000"/>
<path d="M1074 431.7L1245 431.7" fill="none" stroke="#170f13" stroke-width="1.25"/>
<path d="M1076.6 267L1134.8 267Q1137.4 267 1137.4 269.6L1137.4 352.5" fill="none" stroke="#170f13" stroke-width="1.25" stroke-dasharray="4.2 2.6"/>
<polygon points="1137.4,352.5 1135.1,349.4 1139.7,349.4" fill="#000"/>
<path d="M1074.8 369.8L1129.4 369.8" fill="none" stroke="#170f13" stroke-width="1.25"/>
<polygon points="1129.4,369.8 1126.3,372.1 1126.3,367.5" fill="#000"/>
<path d="M1143 362.5L1169 362.5" fill="none" stroke="#170f13" stroke-width="1.25"/>
<polygon points="1169,362.5 1165.9,364.8 1165.9,360.2" fill="#000"/>
<path d="M1189 362.5L1245 362.5" fill="none" stroke="#170f13" stroke-width="1.25"/>
<circle cx="987.1" cy="328.75" r="2.1" fill="#000"/>
<rect x="524.7" y="290" width="15.4" height="8.8" fill="#fff" rx="1" opacity="0.8"/>
<rect x="525.6" y="290.9" width="13.2" height="7" fill="#fff" stroke="#1a1a1a" stroke-width="1.1" rx="0.6"/>
<rect x="529.8" y="291.5" width="6" height="5.8" fill="#b9b9e6"/>
<polygon points="530.6,292.4 534.9,296.5 530.6,296.5" fill="#ff6a3a"/>
<polygon points="531.4,292.1 535.2,292.1 535.2,295.7" fill="#eef0fb"/>
<polygon points="538.6,290.5 540.2,290.5 545.4,294.1 545.4,294.7 540.2,298.3 538.6,298.3" fill="#000"/>
<rect x="524.7" y="331" width="15.4" height="8.8" fill="#fff" rx="1" opacity="0.8"/>
<rect x="525.6" y="331.9" width="13.2" height="7" fill="#fff" stroke="#1a1a1a" stroke-width="1.1" rx="0.6"/>
<rect x="529.8" y="332.5" width="6" height="5.8" fill="#b9b9e6"/>
<polygon points="530.6,333.4 534.9,337.5 530.6,337.5" fill="#ff6a3a"/>
<polygon points="531.4,333.1 535.2,333.1 535.2,336.7" fill="#eef0fb"/>
<polygon points="538.6,331.5 540.2,331.5 545.4,335.1 545.4,335.7 540.2,339.3 538.6,339.3" fill="#000"/>
<rect x="524.7" y="391" width="15.4" height="8.8" fill="#fff" rx="1" opacity="0.8"/>
<rect x="525.6" y="391.9" width="13.2" height="7" fill="#fff" stroke="#1a1a1a" stroke-width="1.1" rx="0.6"/>
<rect x="529.8" y="392.5" width="6" height="5.8" fill="#b9b9e6"/>
<polygon points="530.6,393.4 534.9,397.5 530.6,397.5" fill="#ff6a3a"/>
<polygon points="531.4,393.1 535.2,393.1 535.2,396.7" fill="#eef0fb"/>
<polygon points="538.6,391.5 540.2,391.5 545.4,395.1 545.4,395.7 540.2,399.3 538.6,399.3" fill="#000"/>
<rect x="642.8" y="441.2" width="15.4" height="8.8" fill="#fff" rx="1" opacity="0.8"/>
<rect x="643.7" y="442.1" width="13.2" height="7" fill="#fff" stroke="#1a1a1a" stroke-width="1.1" rx="0.6"/>
<rect x="647.9" y="442.7" width="6" height="5.8" fill="#b9b9e6"/>
<polygon points="648.7,443.6 653,447.7 648.7,447.7" fill="#ff6a3a"/>
<polygon points="649.5,443.3 653.3,443.3 653.3,446.9" fill="#eef0fb"/>
<polygon points="656.7,441.7 658.3,441.7 663.5,445.3 663.5,445.9 658.3,449.5 656.7,449.5" fill="#000"/>
<rect x="636.9" y="311.3" width="27.8" height="30.8" fill="#000"/>
<rect x="640.1" y="312.8" width="23.2" height="27.8" fill="#fff"/>
<path d="M645.1 320.8V335.9H657.9" fill="none" stroke="#35356f" stroke-width="1.9"/>
<polygon points="642.7,321.9 645.1,318.5 647.5,321.9" fill="#35356f"/>
<polygon points="657.1,333.5 660.5,335.9 657.1,338.3" fill="#35356f"/>
<polygon points="646.3,328.7 656.7,316.9 662.9,322.3 659.9,324.3 658.5,328.3 655.9,329.9 650.9,327.1" fill="#56d23e" stroke="#18a318" stroke-width="0.9"/>
<polygon points="652.5,321.7 656.7,316.9 662.9,322.3 659.9,324.3 658.5,328.3 654.7,329.1 654.5,322.3" fill="#74e05a"/>
<rect x="646.7" y="330.3" width="3.6" height="3.6" fill="#f4f4fb" stroke="#6f6fa8" stroke-width="0.7"/>
<polygon points="648.5,312.9 650.5,310.7 652.5,312.9 650.5,315.1" fill="#e6ecfb" stroke="#98a6e6" stroke-width="0.7"/>
<polygon points="650.5,310.7 652.5,312.9 650.5,312.9" fill="#6fb8f4"/>
<rect x="636.9" y="377.9" width="27.8" height="30.8" fill="#000"/>
<rect x="640.1" y="379.4" width="23.2" height="27.8" fill="#fff"/>
<path d="M645.1 387.4V402.5H657.9" fill="none" stroke="#35356f" stroke-width="1.9"/>
<polygon points="642.7,388.5 645.1,385.1 647.5,388.5" fill="#35356f"/>
<polygon points="657.1,400.1 660.5,402.5 657.1,404.9" fill="#35356f"/>
<path d="M646.9 398.5L649.5 394.5L652.1 396.3L654.9 391.9L658.5 392.9" fill="none" stroke="#18a318" stroke-width="1.5"/>
<polygon points="653.7,393.3 653.7,388.1 651.5,388.1 655.9,383.3 660.3,388.1 658.1,388.1 658.1,393.3" fill="#62d846" stroke="#18a318" stroke-width="0.9"/>
<polygon points="648.5,379.5 650.5,377.3 652.5,379.5 650.5,381.7" fill="#e6ecfb" stroke="#98a6e6" stroke-width="0.7"/>
<polygon points="650.5,377.3 652.5,379.5 650.5,379.5" fill="#6fb8f4"/>
<rect x="781" y="427.9" width="27.8" height="30.8" fill="#000"/>
<rect x="784.2" y="429.4" width="23.2" height="27.8" fill="#fff"/>
<path d="M789.2 437.4V452.5H802" fill="none" stroke="#35356f" stroke-width="1.9"/>
<polygon points="786.8,438.5 789.2,435.1 791.6,438.5" fill="#35356f"/>
<polygon points="801.2,450.1 804.6,452.5 801.2,454.9" fill="#35356f"/>
<path d="M791 448.5L793.6 444.5L796.2 446.3L799 441.9L802.6 442.9" fill="none" stroke="#18a318" stroke-width="1.5"/>
<polygon points="797.8,443.3 797.8,438.1 795.6,438.1 800,433.3 804.4,438.1 802.2,438.1 802.2,443.3" fill="#62d846" stroke="#18a318" stroke-width="0.9"/>
<polygon points="792.6,429.5 794.6,427.3 796.6,429.5 794.6,431.7" fill="#e6ecfb" stroke="#98a6e6" stroke-width="0.7"/>
<polygon points="794.6,427.3 796.6,429.5 794.6,429.5" fill="#6fb8f4"/>
<rect x="787.3" y="321" width="15.4" height="15.4" fill="#fff" rx="1" opacity="0.7"/>
<rect x="788" y="321.7" width="14" height="14" fill="#fff" stroke="#000" stroke-width="1.2"/>
<path d="M791.4 328.7H798.6M795 325.1V332.3" fill="none" stroke="#6a6ac4" stroke-width="2.1"/>
<rect x="866.8" y="321" width="15.4" height="15.4" fill="#fff" rx="1" opacity="0.7"/>
<rect x="867.5" y="321.7" width="14" height="14" fill="#fff" stroke="#000" stroke-width="1.2"/>
<path d="M870.9 328.7H878.1M874.5 325.1V332.3" fill="none" stroke="#6a6ac4" stroke-width="2.1"/>
<rect x="1003.7" y="321.1" width="15.4" height="15.4" fill="#fff" rx="1" opacity="0.7"/>
<rect x="1004.4" y="321.8" width="14" height="14" fill="#fff" stroke="#000" stroke-width="1.2"/>
<path d="M1008.2 325.6L1014.6 332M1014.6 325.6L1008.2 332" fill="none" stroke="#6a6ac4" stroke-width="2.3"/>
<rect x="922.4" y="324.25" width="15.4" height="9" fill="#fff" rx="1" opacity="0.7"/>
<rect x="923" y="324.85" width="14.2" height="7.8" fill="#000" rx="0.8"/>
<rect x="928" y="325.95" width="7.4" height="5.6" fill="#b9b9e6"/>
<polygon points="928.8,326.85 934.5,330.75 928.8,330.75" fill="#ff6a3a"/>
<polygon points="929.6,326.55 934.8,326.55 934.8,329.95" fill="#eef0fb"/>
<polygon points="937.2,325.05 938.6,325.05 943.2,328.75 938.6,332.45 937.2,332.45" fill="#fff" stroke="#000" stroke-width="0.9"/>
<rect x="1053" y="324.25" width="15.4" height="9" fill="#fff" rx="1" opacity="0.7"/>
<rect x="1053.6" y="324.85" width="14.2" height="7.8" fill="#000" rx="0.8"/>
<rect x="1058.6" y="325.95" width="7.4" height="5.6" fill="#b9b9e6"/>
<polygon points="1059.4,326.85 1065.1,330.75 1059.4,330.75" fill="#ff6a3a"/>
<polygon points="1060.2,326.55 1065.4,326.55 1065.4,329.95" fill="#eef0fb"/>
<polygon points="1067.8,325.05 1069.2,325.05 1073.8,328.75 1069.2,332.45 1067.8,332.45" fill="#fff" stroke="#000" stroke-width="0.9"/>
<rect x="1053.4" y="427.2" width="15.4" height="9" fill="#fff" rx="1" opacity="0.7"/>
<rect x="1054" y="427.8" width="14.2" height="7.8" fill="#000" rx="0.8"/>
<rect x="1059" y="428.9" width="7.4" height="5.6" fill="#b9b9e6"/>
<polygon points="1059.8,429.8 1065.5,433.7 1059.8,433.7" fill="#ff6a3a"/>
<polygon points="1060.6,429.5 1065.8,429.5 1065.8,432.9" fill="#eef0fb"/>
<polygon points="1068.2,428 1069.6,428 1074.2,431.7 1069.6,435.4 1068.2,435.4" fill="#000" stroke="#000" stroke-width="0.9"/>
<rect x="1168.4" y="358" width="15.4" height="9" fill="#fff" rx="1" opacity="0.7"/>
<rect x="1169" y="358.6" width="14.2" height="7.8" fill="#000" rx="0.8"/>
<rect x="1174" y="359.7" width="7.4" height="5.6" fill="#b9b9e6"/>
<polygon points="1174.8,360.6 1180.5,364.5 1174.8,364.5" fill="#ff6a3a"/>
<polygon points="1175.6,360.3 1180.8,360.3 1180.8,363.7" fill="#eef0fb"/>
<polygon points="1183.2,358.8 1184.6,358.8 1189.2,362.5 1184.6,366.2 1183.2,366.2" fill="#000" stroke="#000" stroke-width="0.9"/>
<rect x="922.4" y="262.4" width="22.2" height="9.2" fill="#fff" rx="1" opacity="0.7"/>
<rect x="923" y="263" width="21" height="8" fill="#fff" stroke="#000" stroke-width="1.1" rx="0.8"/>
<rect x="923" y="263" width="4.6" height="8" fill="#000"/>
<polygon points="932.6,267 935.2,264.6 937.8,267 935.2,269.4" fill="#dfe6fb" stroke="#7f92e0" stroke-width="0.8"/>
<polygon points="935.2,264.6 937.8,267 935.2,267" fill="#6fb2f2"/>
<rect x="1055" y="262.4" width="22.2" height="9.2" fill="#fff" rx="1" opacity="0.7"/>
<rect x="1055.6" y="263" width="21" height="8" fill="#fff" stroke="#000" stroke-width="1.1" rx="0.8"/>
<rect x="1055.6" y="263" width="4.6" height="8" fill="#000"/>
<polygon points="1065.2,267 1067.8,264.6 1070.4,267 1067.8,269.4" fill="#dfe6fb" stroke="#7f92e0" stroke-width="0.8"/>
<polygon points="1067.8,264.6 1070.4,267 1067.8,267" fill="#6fb2f2"/>
<rect x="1053.2" y="365.2" width="22.2" height="9.2" fill="#fff" rx="1" opacity="0.7"/>
<rect x="1053.8" y="365.8" width="21" height="8" fill="#fff" stroke="#000" stroke-width="1.1" rx="0.8"/>
<rect x="1053.8" y="365.8" width="4.6" height="8" fill="#000"/>
<polygon points="1063.4,369.8 1066,367.4 1068.6,369.8 1066,372.2" fill="#dfe6fb" stroke="#7f92e0" stroke-width="0.8"/>
<polygon points="1066,367.4 1068.6,369.8 1066,369.8" fill="#6fb2f2"/>
<rect x="928.2" y="393" width="22.2" height="9.2" fill="#fff" rx="1" opacity="0.7"/>
<rect x="928.8" y="393.6" width="21" height="8" fill="#fff" stroke="#000" stroke-width="1.1" rx="0.8"/>
<rect x="928.8" y="393.6" width="4.6" height="8" fill="#000"/>
<polygon points="938.4,397.6 941,395.2 943.6,397.6 941,400" fill="#dfe6fb" stroke="#7f92e0" stroke-width="0.8"/>
<polygon points="941,395.2 943.6,397.6 941,397.6" fill="#6fb2f2"/>
<rect x="922.6" y="434" width="22.2" height="9.2" fill="#fff" rx="1" opacity="0.7"/>
<rect x="923.2" y="434.6" width="21" height="8" fill="#fff" stroke="#000" stroke-width="1.1" rx="0.8"/>
<rect x="923.2" y="434.6" width="4.6" height="8" fill="#000"/>
<polygon points="932.8,438.6 935.4,436.2 938,438.6 935.4,441" fill="#dfe6fb" stroke="#7f92e0" stroke-width="0.8"/>
<polygon points="935.4,436.2 938,438.6 935.4,438.6" fill="#6fb2f2"/>
<rect x="1128.8" y="351.9" width="14.8" height="21.2" fill="#fff" rx="1" opacity="0.7"/>
<rect x="1129.4" y="352.5" width="13.6" height="20" fill="#fff" stroke="#555" stroke-width="1.1"/>
<rect x="1130.4" y="357.7" width="2.8" height="2.8" fill="#9fe08f" stroke="#189a18" stroke-width="0.9"/>
<path d="M1134 358.9H1136L1139.6 362.9H1143" fill="none" stroke="#189a18" stroke-width="1.5"/>
<rect x="1130.4" y="364.7" width="2.8" height="2.8" fill="#b9b9f0" stroke="#6a6ac4" stroke-width="0.8"/>
<rect x="1004.4" y="421" width="14.8" height="21.2" fill="#fff" rx="1" opacity="0.7"/>
<rect x="1005" y="421.6" width="13.6" height="20" fill="#fff" stroke="#555" stroke-width="1.1"/>
<rect x="1006" y="426.8" width="2.8" height="2.8" fill="#9fe08f" stroke="#189a18" stroke-width="0.9"/>
<path d="M1009.6 428H1011.6L1015.2 432H1018.6" fill="none" stroke="#189a18" stroke-width="1.5"/>
<rect x="1006" y="433.8" width="2.8" height="2.8" fill="#b9b9f0" stroke="#6a6ac4" stroke-width="0.8"/>
<text x="509.25" y="307.9" font-size="6.9" fill="#0404f4" textLength="52.09" lengthAdjust="spacingAndGlyphs" stroke="#0404f4" stroke-width="0.22">Epm_rpmEngSpd</text>
<text x="509.25" y="317" font-size="6.9" fill="#080808" textLength="40.89" lengthAdjust="spacingAndGlyphs" stroke="#080808" stroke-width="0.22">231.00 U/min</text>
<text x="514.05" y="348.9" font-size="6.9" fill="#0404f4" textLength="42.59" lengthAdjust="spacingAndGlyphs" stroke="#0404f4" stroke-width="0.22">Amf_facRelAir</text>
<text x="514.05" y="358" font-size="6.9" fill="#080808" textLength="27.59" lengthAdjust="spacingAndGlyphs" stroke="#080808" stroke-width="0.22">1.88 rpm</text>
<text x="574.05" y="351.6" font-size="6.9" fill="#0404f4" textLength="152.79" lengthAdjust="spacingAndGlyphs" stroke="#0404f4" stroke-width="0.22">Afr_rpmEngSpdfacRelAir2facLambdaReqBase_MAP</text>
<text x="574.05" y="360.7" font-size="6.9" fill="#080808" textLength="29.79" lengthAdjust="spacingAndGlyphs" stroke="#080808" stroke-width="0.22">1.00 Grad</text>
<text x="519.05" y="408.8" font-size="6.9" fill="#0404f4" textLength="32.29" lengthAdjust="spacingAndGlyphs" stroke="#0404f4" stroke-width="0.22">Ctc_atCool</text>
<text x="519.05" y="417.6" font-size="6.9" fill="#080808" textLength="29.79" lengthAdjust="spacingAndGlyphs" stroke="#080808" stroke-width="0.22">4.39 Grad</text>
<text x="595.95" y="417.9" font-size="6.9" fill="#0404f4" textLength="108.99" lengthAdjust="spacingAndGlyphs" stroke="#0404f4" stroke-width="0.22">Afr_atCool2facLambdaReqCorr_CUR</text>
<text x="595.95" y="427" font-size="6.9" fill="#080808" textLength="45.99" lengthAdjust="spacingAndGlyphs" stroke="#080808" stroke-width="0.22">-0.402 GradKW</text>
<text x="636.15" y="458.8" font-size="6.9" fill="#0404f4" textLength="34.79" lengthAdjust="spacingAndGlyphs" stroke="#0404f4" stroke-width="0.22">Mtc_atMani</text>
<text x="636.15" y="467.9" font-size="6.9" fill="#080808" textLength="29.79" lengthAdjust="spacingAndGlyphs" stroke="#080808" stroke-width="0.22">2.83 Grad</text>
<text x="739.45" y="467.8" font-size="6.9" fill="#0404f4" textLength="110.09" lengthAdjust="spacingAndGlyphs" stroke="#0404f4" stroke-width="0.22">Afr_atMani2facLambdaReqCorr_CUR</text>
<text x="739.45" y="476.9" font-size="6.9" fill="#080808" textLength="39.39" lengthAdjust="spacingAndGlyphs" stroke="#080808" stroke-width="0.22">0.00 GradKW</text>
<text x="913.05" y="280.8" font-size="6.9" fill="#0404f4" textLength="40.09" lengthAdjust="spacingAndGlyphs" stroke="#0404f4" stroke-width="0.22">Afr_facStoich</text>
<text x="913.05" y="289.9" font-size="6.9" fill="#080808" textLength="42.89" lengthAdjust="spacingAndGlyphs" stroke="#080808" stroke-width="0.22">14.69 GradKW</text>
<text x="898.45" y="341.6" font-size="6.9" fill="#0404f4" textLength="69.79" lengthAdjust="spacingAndGlyphs" stroke="#0404f4" stroke-width="0.22">Afr_facLambdaReqCalc</text>
<text x="898.45" y="351.6" font-size="6.9" fill="#080808" textLength="38.49" lengthAdjust="spacingAndGlyphs" stroke="#080808" stroke-width="0.22">0.0791 g/km</text>
<text x="1035.25" y="280.8" font-size="6.9" fill="#0404f4" textLength="61.49" lengthAdjust="spacingAndGlyphs" stroke="#0404f4" stroke-width="0.22">Afr_flgRatioOverride</text>
<text x="1035.25" y="289.9" font-size="6.9" fill="#080808" textLength="29.49" lengthAdjust="spacingAndGlyphs" stroke="#080808" stroke-width="0.22">0.00 grad</text>
<text x="1039.45" y="341.6" font-size="6.9" fill="#0404f4" textLength="49.89" lengthAdjust="spacingAndGlyphs" stroke="#0404f4" stroke-width="0.22">Afr_facRatioCalc</text>
<text x="1039.45" y="351.6" font-size="6.9" fill="#080808" textLength="34.39" lengthAdjust="spacingAndGlyphs" stroke="#080808" stroke-width="0.22">0.226 g/km</text>
<text x="1039.06" y="382.5" font-size="6.9" fill="#0404f4" textLength="49.89" lengthAdjust="spacingAndGlyphs" stroke="#0404f4" stroke-width="0.22">Afr_facRatioMan</text>
<text x="1039.06" y="392.5" font-size="6.9" fill="#080808" textLength="30.69" lengthAdjust="spacingAndGlyphs" stroke="#080808" stroke-width="0.22">1.00 g/km</text>
<text x="898.65" y="410.4" font-size="6.9" fill="#0404f4" textLength="81.19" lengthAdjust="spacingAndGlyphs" stroke="#0404f4" stroke-width="0.22">Afr_flgLambdaReqOverride</text>
<text x="898.65" y="420.6" font-size="6.9" fill="#080808" textLength="29.49" lengthAdjust="spacingAndGlyphs" stroke="#080808" stroke-width="0.22">0.00 grad</text>
<text x="898.65" y="451.5" font-size="6.9" fill="#0404f4" textLength="69.69" lengthAdjust="spacingAndGlyphs" stroke="#0404f4" stroke-width="0.22">Afr_facLambdaReqMan</text>
<text x="898.65" y="461.5" font-size="6.9" fill="#080808" textLength="30.99" lengthAdjust="spacingAndGlyphs" stroke="#080808" stroke-width="0.22">1.00 g/km</text>
<text x="1035.95" y="444.9" font-size="6.9" fill="#0404f4" textLength="56.99" lengthAdjust="spacingAndGlyphs" stroke="#0404f4" stroke-width="0.22">Afr_facLambdaReq</text>
<text x="1035.95" y="453.8" font-size="6.9" fill="#080808" textLength="34.39" lengthAdjust="spacingAndGlyphs" stroke="#080808" stroke-width="0.22">0.124 g/km</text>
<text x="1160.45" y="375.4" font-size="6.9" fill="#0404f4" textLength="37.19" lengthAdjust="spacingAndGlyphs" stroke="#0404f4" stroke-width="0.22">Afr_facRatio</text>
<text x="1160.45" y="384.6" font-size="6.9" fill="#080808" textLength="34.69" lengthAdjust="spacingAndGlyphs" stroke="#080808" stroke-width="0.22">0.372 g/km</text>
<text x="948.65" y="306.9" font-size="6.9" fill="#080808" textLength="33.69" lengthAdjust="spacingAndGlyphs" stroke="#080808" stroke-width="0.22">/1/Afr_calc</text>
<text x="1080.15" y="306.8" font-size="6.9" fill="#080808" textLength="33.59" lengthAdjust="spacingAndGlyphs" stroke="#080808" stroke-width="0.22">/3/Afr_calc</text>
<text x="1080.15" y="409.8" font-size="6.9" fill="#080808" textLength="33.59" lengthAdjust="spacingAndGlyphs" stroke="#080808" stroke-width="0.22">/2/Afr_calc</text>
<text x="1194.86" y="340.6" font-size="6.9" fill="#080808" textLength="33.69" lengthAdjust="spacingAndGlyphs" stroke="#080808" stroke-width="0.22">/4/Afr_calc</text>
<rect x="488.2" y="243.4" width="13" height="10" fill="#fff" stroke="#1c1c1c" stroke-width="1.15" rx="2.8"/>
<path d="M491 248.4H498.4" fill="none" stroke="#000" stroke-width="2"/>
<rect x="493.6" y="497.5" width="22" height="8.2" fill="#c0054f"/>
<text x="494.74" y="503" font-size="9.2" fill="#fff" textLength="19.32" lengthAdjust="spacingAndGlyphs">EHA</text>
<rect x="1203.8" y="497.5" width="39" height="8.3" fill="#c0054f"/>
<text x="1205.34" y="503.1" font-size="9.2" fill="#fff" textLength="35.92" lengthAdjust="spacingAndGlyphs">Compact</text>
<text x="863.15" y="504.3" font-size="6.9" fill="#0404f4" textLength="9.19" lengthAdjust="spacingAndGlyphs" stroke="#0404f4" stroke-width="0.22">Afr</text>
<text x="1264.95" y="341.6" font-size="6.9" fill="#0404f4" textLength="37.19" lengthAdjust="spacingAndGlyphs" stroke="#0404f4" stroke-width="0.22">Afr_facRatio</text>
<text x="1264.95" y="351.8" font-size="6.9" fill="#080808" textLength="34.39" lengthAdjust="spacingAndGlyphs" stroke="#080808" stroke-width="0.22">0.372 g/km</text>
<text x="1264.95" y="447.6" font-size="6.9" fill="#0404f4" textLength="57.39" lengthAdjust="spacingAndGlyphs" stroke="#0404f4" stroke-width="0.22">Afr_facLambdaReq</text>
<text x="1264.95" y="456.7" font-size="6.9" fill="#080808" textLength="34.39" lengthAdjust="spacingAndGlyphs" stroke="#080808" stroke-width="0.22">0.124 g/km</text>
<rect x="1661.3" y="419" width="130.2" height="57.3" fill="#b0c1da" stroke="#2a2a2a" stroke-width="1.5"/>
<polygon points="1641.3,425.15 1654.1,425.15 1661.1,431.75 1654.1,438.35 1641.3,438.35" fill="#fff" stroke="#454545" stroke-width="1"/>
<rect x="1642.6" y="427.65" width="8.5" height="8.2" fill="url(#org)" stroke="#f08a6a" stroke-width="0.5"/>
<polygon points="1641.3,450.8 1654.1,450.8 1661.1,457.4 1654.1,464 1641.3,464" fill="#fff" stroke="#454545" stroke-width="1"/>
<rect x="1642.6" y="453.3" width="8.5" height="8.2" fill="url(#org)" stroke="#f08a6a" stroke-width="0.5"/>
<polygon points="1791.8,438 1804.6,438 1811.6,444.6 1804.6,451.2 1791.8,451.2" fill="#fff" stroke="#454545" stroke-width="1"/>
<rect x="1793.1" y="440.5" width="8.5" height="8.2" fill="url(#org)" stroke="#f08a6a" stroke-width="0.5"/>
<text x="1663.65" y="433.8" font-size="6.9" fill="#0404f4" textLength="57.09" lengthAdjust="spacingAndGlyphs" stroke="#0404f4" stroke-width="0.22">Afr_facLambdaReq</text>
<text x="1663.65" y="442.8" font-size="6.9" fill="#080808" textLength="34.49" lengthAdjust="spacingAndGlyphs" stroke="#080808" stroke-width="0.22">0.124 g/km</text>
<text x="1663.65" y="459.6" font-size="6.9" fill="#0404f4" textLength="50.19" lengthAdjust="spacingAndGlyphs" stroke="#0404f4" stroke-width="0.22">Isc_flgFuelCutoff</text>
<text x="1663.65" y="468.5" font-size="6.9" fill="#080808" textLength="29.19" lengthAdjust="spacingAndGlyphs" stroke="#080808" stroke-width="0.22">4.00 grad</text>
<text x="1729.25" y="446.9" font-size="6.9" fill="#0404f4" textLength="58.59" lengthAdjust="spacingAndGlyphs" stroke="#0404f4" stroke-width="0.22">Lcc_facLambdaCorr</text>
<text x="1729.25" y="455.7" font-size="6.9" fill="#080808" textLength="34.49" lengthAdjust="spacingAndGlyphs" stroke="#080808" stroke-width="0.22">0.470 g/km</text>
<rect x="1656.2" y="415.2" width="13" height="10" fill="#fff" stroke="#1c1c1c" stroke-width="1.15" rx="2.8"/>
<path d="M1659.4 420.2H1666M1662.7 417.1V423.3" fill="none" stroke="#000" stroke-width="2"/>
<rect x="1661.3" y="476.3" width="21.2" height="10" fill="#0a2f7f"/>
<text x="1663.04" y="483.6" font-size="9.2" fill="#fff" textLength="17.22" lengthAdjust="spacingAndGlyphs">EH2</text>
<rect x="1752.8" y="476.3" width="38.7" height="10" fill="#0a2f7f"/>
<text x="1754.54" y="483.6" font-size="9.2" fill="#fff" textLength="34.92" lengthAdjust="spacingAndGlyphs">Compact</text>
<text x="1721.25" y="485.6" font-size="6.9" fill="#0404f4" textLength="10.09" lengthAdjust="spacingAndGlyphs" stroke="#0404f4" stroke-width="0.22">Lcc</text>
<rect x="2395.2" y="406.2" width="130.5" height="82.8" fill="#add7ea" stroke="#2a2a2a" stroke-width="1.5"/>
<polygon points="2375,412.4 2387.8,412.4 2394.8,419 2387.8,425.6 2375,425.6" fill="#fff" stroke="#454545" stroke-width="1"/>
<rect x="2376.3" y="414.9" width="8.5" height="8.2" fill="url(#org)" stroke="#f08a6a" stroke-width="0.5"/>
<polygon points="2375,438.15 2387.8,438.15 2394.8,444.75 2387.8,451.35 2375,451.35" fill="#fff" stroke="#454545" stroke-width="1"/>
<rect x="2376.3" y="440.65" width="8.5" height="8.2" fill="url(#org)" stroke="#f08a6a" stroke-width="0.5"/>
<polygon points="2375,463.5 2387.8,463.5 2394.8,470.1 2387.8,476.7 2375,476.7" fill="#fff" stroke="#454545" stroke-width="1"/>
<rect x="2376.3" y="466" width="8.5" height="8.2" fill="url(#org)" stroke="#f08a6a" stroke-width="0.5"/>
<text x="2397.36" y="420.8" font-size="6.9" fill="#0404f4" textLength="36.99" lengthAdjust="spacingAndGlyphs" stroke="#0404f4" stroke-width="0.22">Afr_facRatio</text>
<text x="2397.36" y="429.7" font-size="6.9" fill="#080808" textLength="34.29" lengthAdjust="spacingAndGlyphs" stroke="#080808" stroke-width="0.22">0.372 g/km</text>
<text x="2397.36" y="446.7" font-size="6.9" fill="#0404f4" textLength="58.89" lengthAdjust="spacingAndGlyphs" stroke="#0404f4" stroke-width="0.22">Lcc_facLambdaCorr</text>
<text x="2397.36" y="455.6" font-size="6.9" fill="#080808" textLength="34.29" lengthAdjust="spacingAndGlyphs" stroke="#080808" stroke-width="0.22">0.470 g/km</text>
<text x="2397.36" y="472" font-size="6.9" fill="#0404f4" textLength="32.19" lengthAdjust="spacingAndGlyphs" stroke="#0404f4" stroke-width="0.22">Tqs_tqReq</text>
<text x="2397.36" y="480.8" font-size="6.9" fill="#080808" textLength="29.99" lengthAdjust="spacingAndGlyphs" stroke="#080808" stroke-width="0.22">1.27 Grad</text>
<rect x="2389.4" y="402.3" width="13" height="10" fill="#fff" stroke="#1c1c1c" stroke-width="1.15" rx="2.8"/>
<path d="M2392.6 407.3H2399.2M2395.9 404.2V410.4" fill="none" stroke="#000" stroke-width="2"/>
<rect x="2395.2" y="489" width="20.6" height="9.9" fill="#0a7fc5"/>
<text x="2396.94" y="496.2" font-size="9.2" fill="#fff" textLength="16.92" lengthAdjust="spacingAndGlyphs">EH1</text>
<rect x="2486.2" y="489" width="39.5" height="9.9" fill="#0a7fc5"/>
<text x="2487.94" y="496.2" font-size="9.2" fill="#fff" textLength="35.92" lengthAdjust="spacingAndGlyphs">Compact</text>
<text x="2453.36" y="498.6" font-size="6.9" fill="#0404f4" textLength="12.99" lengthAdjust="spacingAndGlyphs" stroke="#0404f4" stroke-width="0.22">Fmc</text>
<rect x="1416.3" y="501.3" width="890.2" height="441.2" fill="#b0c1da" stroke="#2a2e36" stroke-width="1.3"/>
<line x1="2306.5" y1="500.7" x2="2306.5" y2="943.1" stroke="#000" stroke-width="1.4"/>
<path d="M1467.5 570.25L1508 570.25" fill="none" stroke="#170f13" stroke-width="1.25"/>
<polygon points="1508,570.25 1504.9,572.55 1504.9,567.95" fill="#000"/>
<path d="M1497.5 570.25L1497.5 664.3Q1497.5 666.9 1500.1 666.9L1560.3 666.9" fill="none" stroke="#170f13" stroke-width="1.25"/>
<polygon points="1560.3,666.9 1557.2,669.2 1557.2,664.6" fill="#000"/>
<path d="M1467.5 653.1L1560.3 653.1" fill="none" stroke="#170f13" stroke-width="1.25"/>
<polygon points="1560.3,653.1 1557.2,655.4 1557.2,650.8" fill="#000"/>
<path d="M1490.6 653.1L1490.6 597.35Q1490.6 594.75 1493.2 594.75L1508 594.75" fill="none" stroke="#170f13" stroke-width="1.25"/>
<polygon points="1508,594.75 1504.9,597.05 1504.9,592.45" fill="#000"/>
<path d="M1490.6 653.1L1490.6 783.7Q1490.6 786.3 1493.2 786.3L1560.3 786.3" fill="none" stroke="#170f13" stroke-width="1.25"/>
<polygon points="1560.3,786.3 1557.2,788.6 1557.2,784" fill="#000"/>
<path d="M1490.6 726.3L1564.2 726.3" fill="none" stroke="#170f13" stroke-width="1.25"/>
<polygon points="1564.2,726.3 1561.1,728.6 1561.1,724" fill="#000"/>
<circle cx="1497.5" cy="570.25" r="2.1" fill="#000"/>
<circle cx="1490.6" cy="653.1" r="2.1" fill="#000"/>
<circle cx="1490.6" cy="726.3" r="2.1" fill="#000"/>
<path d="M1647.5 582.5L2063.8 582.5" fill="none" stroke="#170f13" stroke-width="1.25"/>
<polygon points="2063.8,582.5 2060.7,584.8 2060.7,580.2" fill="#000"/>
<path d="M1588 660L1677.6 660" fill="none" stroke="#170f13" stroke-width="1.25"/>
<polygon points="1677.6,660 1674.5,662.3 1674.5,657.7" fill="#000"/>
<path d="M1698 660L1991.8 660" fill="none" stroke="#170f13" stroke-width="1.25"/>
<polygon points="1991.8,660 1988.7,662.3 1988.7,657.7" fill="#000"/>
<path d="M1592 726.3L1836.2 726.3" fill="none" stroke="#170f13" stroke-width="1.25"/>
<polygon points="1836.2,726.3 1833.1,728.6 1833.1,724" fill="#000"/>
<path d="M1856.6 726.3L1934.8 726.3" fill="none" stroke="#170f13" stroke-width="1.25"/>
<polygon points="1934.8,726.3 1931.7,728.6 1931.7,724" fill="#000"/>
<path d="M1949.1 726.5L1997.2 726.5Q1999.8 726.5 1999.8 723.9L1999.8 667.4" fill="none" stroke="#170f13" stroke-width="1.25"/>
<polygon points="1999.8,667.4 2002.1,670.5 1997.5,670.5" fill="#000"/>
<path d="M2006 660.2L2027.9 660.2" fill="none" stroke="#170f13" stroke-width="1.25"/>
<polygon points="2027.9,660.2 2024.8,662.5 2024.8,657.9" fill="#000"/>
<path d="M2042 660.2L2069.5 660.2Q2072.1 660.2 2072.1 657.6L2072.1 589.8" fill="none" stroke="#170f13" stroke-width="1.25"/>
<polygon points="2072.1,589.8 2074.4,592.9 2069.8,592.9" fill="#000"/>
<path d="M2078 582.5L2115.6 582.5" fill="none" stroke="#170f13" stroke-width="1.25"/>
<polygon points="2115.6,582.5 2112.5,584.8 2112.5,580.2" fill="#000"/>
<path d="M2135.8 582.5L2193.2 582.5" fill="none" stroke="#170f13" stroke-width="1.25"/>
<polygon points="2193.2,582.5 2190.1,584.8 2190.1,580.2" fill="#000"/>
<path d="M2146.2 520.9L2198.9 520.9Q2201.5 520.9 2201.5 523.5L2201.5 578" fill="none" stroke="#170f13" stroke-width="1.25" stroke-dasharray="4.2 2.6"/>
<polygon points="2201.5,578 2199.2,574.9 2203.8,574.9" fill="#000"/>
<path d="M2137.4 623.5L2179.7 623.5Q2182.3 623.5 2182.3 620.9L2182.3 598.2Q2182.3 595.6 2184.9 595.6L2193.2 595.6" fill="none" stroke="#170f13" stroke-width="1.25"/>
<polygon points="2193.2,595.6 2190.1,597.9 2190.1,593.3" fill="#000"/>
<path d="M2206.8 588.5L2230.4 588.5" fill="none" stroke="#170f13" stroke-width="1.25"/>
<polygon points="2230.4,588.5 2227.3,590.8 2227.3,586.2" fill="#000"/>
<path d="M2250.6 588.5L2306.5 588.5" fill="none" stroke="#170f13" stroke-width="1.25"/>
<path d="M1467.6 799.6L1560.3 799.6" fill="none" stroke="#170f13" stroke-width="1.25"/>
<polygon points="1560.3,799.6 1557.2,801.9 1557.2,797.3" fill="#000"/>
<path d="M1588 793.4L1694.8 793.4" fill="none" stroke="#170f13" stroke-width="1.25"/>
<polygon points="1694.8,793.4 1691.7,795.7 1691.7,791.1" fill="#000"/>
<path d="M1709 793.4L1757.4 793.4" fill="none" stroke="#170f13" stroke-width="1.25"/>
<polygon points="1757.4,793.4 1754.3,795.7 1754.3,791.1" fill="#000"/>
<path d="M1777.6 793.4L1856.6 793.4" fill="none" stroke="#170f13" stroke-width="1.25"/>
<polygon points="1856.6,793.4 1853.5,795.7 1853.5,791.1" fill="#000"/>
<path d="M1467.6 859.4L1564.2 859.4" fill="none" stroke="#170f13" stroke-width="1.25"/>
<polygon points="1564.2,859.4 1561.1,861.7 1561.1,857.1" fill="#000"/>
<path d="M1592 859.4L1700.6 859.4Q1703.2 859.4 1703.2 856.8L1703.2 800.5" fill="none" stroke="#170f13" stroke-width="1.25"/>
<polygon points="1703.2,800.5 1705.5,803.6 1700.9,803.6" fill="#000"/>
<path d="M1416.2 900.2L1774 900.2" fill="none" stroke="#170f13" stroke-width="1.25"/>
<path d="M1794 900.2L1862.4 900.2Q1865 900.2 1865 897.6L1865 800.5" fill="none" stroke="#170f13" stroke-width="1.25"/>
<polygon points="1865,800.5 1867.3,803.6 1862.7,803.6" fill="#000"/>
<path d="M1870.6 793.4L1940.4 793.4Q1943 793.4 1943 790.8L1943 733.7" fill="none" stroke="#170f13" stroke-width="1.25"/>
<polygon points="1943,733.7 1945.3,736.8 1940.7,736.8" fill="#000"/>
<path d="M1903.1 793.4L1903.1 828.7Q1903.1 831.3 1905.7 831.3L1914.6 831.3" fill="none" stroke="#170f13" stroke-width="1.25"/>
<polygon points="1914.6,831.3 1911.5,833.6 1911.5,829" fill="#000"/>
<path d="M1934.6 831.3L1940.6 831.3" fill="none" stroke="#170f13" stroke-width="1.25"/>
<path d="M1903.1 799.6L2033.7 799.6Q2036.3 799.6 2036.3 797L2036.3 667.4" fill="none" stroke="#170f13" stroke-width="1.25"/>
<polygon points="2036.3,667.4 2038.6,670.5 2034,670.5" fill="#000"/>
<circle cx="1872.8" cy="793.4" r="1.9" fill="#000"/>
<circle cx="1903.1" cy="793.4" r="2.1" fill="#000"/>
<circle cx="1903.1" cy="799.6" r="2.1" fill="#000"/>
<rect x="1508" y="550" width="139.5" height="65.6" fill="#fff" stroke="#2a2a2a" stroke-width="1.1"/>
<rect x="1510.4" y="552.2" width="134.8" height="61.2" fill="#fff" stroke="#2a2a2a" stroke-width="1.1"/>
<rect x="1508" y="551" width="3.6" height="64" fill="#7d7d7d"/>
<rect x="1503.2" y="546.4" width="13" height="10" fill="#fff" stroke="#1c1c1c" stroke-width="1.15" rx="2.8"/>
<path d="M1506.4 551.4H1513M1509.7 548.3V554.5" fill="none" stroke="#000" stroke-width="2"/>
<text x="1511.06" y="572.8" font-size="6.9" fill="#0404f4" textLength="37.29" lengthAdjust="spacingAndGlyphs" stroke="#0404f4" stroke-width="0.22">Egc_facEgas</text>
<text x="1511.06" y="596.9" font-size="6.9" fill="#0404f4" textLength="51.79" lengthAdjust="spacingAndGlyphs" stroke="#0404f4" stroke-width="0.22">Epm_rpmEngSpd</text>
<text x="1577.45" y="584.8" font-size="6.9" fill="#0404f4" textLength="66.69" lengthAdjust="spacingAndGlyphs" stroke="#0404f4" stroke-width="0.22">Tqs_tqIdleSpdCtrlCorr</text>
<text x="1555.25" y="624.8" font-size="6.9" fill="#0404f4" textLength="44.69" lengthAdjust="spacingAndGlyphs" stroke="#0404f4" stroke-width="0.22">EngSpdControl</text>
<rect x="1447.4" y="565.85" width="15.4" height="8.8" fill="#fff" rx="1" opacity="0.8"/>
<rect x="1448.3" y="566.75" width="13.2" height="7" fill="#fff" stroke="#1a1a1a" stroke-width="1.1" rx="0.6"/>
<rect x="1452.5" y="567.35" width="6" height="5.8" fill="#b9b9e6"/>
<polygon points="1453.3,568.25 1457.6,572.35 1453.3,572.35" fill="#ff6a3a"/>
<polygon points="1454.1,567.95 1457.9,567.95 1457.9,571.55" fill="#eef0fb"/>
<polygon points="1461.3,566.35 1462.9,566.35 1468.1,569.95 1468.1,570.55 1462.9,574.15 1461.3,574.15" fill="#000"/>
<rect x="1447.4" y="648.7" width="15.4" height="8.8" fill="#fff" rx="1" opacity="0.8"/>
<rect x="1448.3" y="649.6" width="13.2" height="7" fill="#fff" stroke="#1a1a1a" stroke-width="1.1" rx="0.6"/>
<rect x="1452.5" y="650.2" width="6" height="5.8" fill="#b9b9e6"/>
<polygon points="1453.3,651.1 1457.6,655.2 1453.3,655.2" fill="#ff6a3a"/>
<polygon points="1454.1,650.8 1457.9,650.8 1457.9,654.4" fill="#eef0fb"/>
<polygon points="1461.3,649.2 1462.9,649.2 1468.1,652.8 1468.1,653.4 1462.9,657 1461.3,657" fill="#000"/>
<rect x="1447.3" y="795.2" width="15.4" height="8.8" fill="#fff" rx="1" opacity="0.8"/>
<rect x="1448.2" y="796.1" width="13.2" height="7" fill="#fff" stroke="#1a1a1a" stroke-width="1.1" rx="0.6"/>
<rect x="1452.4" y="796.7" width="6" height="5.8" fill="#b9b9e6"/>
<polygon points="1453.2,797.6 1457.5,801.7 1453.2,801.7" fill="#ff6a3a"/>
<polygon points="1454,797.3 1457.8,797.3 1457.8,800.9" fill="#eef0fb"/>
<polygon points="1461.2,795.7 1462.8,795.7 1468,799.3 1468,799.9 1462.8,803.5 1461.2,803.5" fill="#000"/>
<rect x="1447.3" y="855" width="15.4" height="8.8" fill="#fff" rx="1" opacity="0.8"/>
<rect x="1448.2" y="855.9" width="13.2" height="7" fill="#fff" stroke="#1a1a1a" stroke-width="1.1" rx="0.6"/>
<rect x="1452.4" y="856.5" width="6" height="5.8" fill="#b9b9e6"/>
<polygon points="1453.2,857.4 1457.5,861.5 1453.2,861.5" fill="#ff6a3a"/>
<polygon points="1454,857.1 1457.8,857.1 1457.8,860.7" fill="#eef0fb"/>
<polygon points="1461.2,855.5 1462.8,855.5 1468,859.1 1468,859.7 1462.8,863.3 1461.2,863.3" fill="#000"/>
<rect x="1773.7" y="895.8" width="15.4" height="8.8" fill="#fff" rx="1" opacity="0.8"/>
<rect x="1774.6" y="896.7" width="13.2" height="7" fill="#fff" stroke="#1a1a1a" stroke-width="1.1" rx="0.6"/>
<rect x="1778.8" y="897.3" width="6" height="5.8" fill="#b9b9e6"/>
<polygon points="1779.6,898.2 1783.9,902.3 1779.6,902.3" fill="#ff6a3a"/>
<polygon points="1780.4,897.9 1784.2,897.9 1784.2,901.5" fill="#eef0fb"/>
<polygon points="1787.6,896.3 1789.2,896.3 1794.4,899.9 1794.4,900.5 1789.2,904.1 1787.6,904.1" fill="#000"/>
<rect x="1560.2" y="642.9" width="27.8" height="30.8" fill="#000"/>
<rect x="1563.4" y="644.4" width="23.2" height="27.8" fill="#fff"/>
<path d="M1568.4 652.4V667.5H1581.2" fill="none" stroke="#35356f" stroke-width="1.9"/>
<polygon points="1566,653.5 1568.4,650.1 1570.8,653.5" fill="#35356f"/>
<polygon points="1580.4,665.1 1583.8,667.5 1580.4,669.9" fill="#35356f"/>
<polygon points="1569.6,660.3 1580,648.5 1586.2,653.9 1583.2,655.9 1581.8,659.9 1579.2,661.5 1574.2,658.7" fill="#56d23e" stroke="#18a318" stroke-width="0.9"/>
<polygon points="1575.8,653.3 1580,648.5 1586.2,653.9 1583.2,655.9 1581.8,659.9 1578,660.7 1577.8,653.9" fill="#74e05a"/>
<rect x="1570" y="661.9" width="3.6" height="3.6" fill="#f4f4fb" stroke="#6f6fa8" stroke-width="0.7"/>
<polygon points="1571.8,644.5 1573.8,642.3 1575.8,644.5 1573.8,646.7" fill="#e6ecfb" stroke="#98a6e6" stroke-width="0.7"/>
<polygon points="1573.8,642.3 1575.8,644.5 1573.8,644.5" fill="#6fb8f4"/>
<rect x="1564.2" y="709" width="27.8" height="30.8" fill="#000"/>
<rect x="1567.4" y="710.5" width="23.2" height="27.8" fill="#fff"/>
<path d="M1572.4 718.5V733.6H1585.2" fill="none" stroke="#35356f" stroke-width="1.9"/>
<polygon points="1570,719.6 1572.4,716.2 1574.8,719.6" fill="#35356f"/>
<polygon points="1584.4,731.2 1587.8,733.6 1584.4,736" fill="#35356f"/>
<path d="M1574.2 729.6L1576.8 725.6L1579.4 727.4L1582.2 723L1585.8 724" fill="none" stroke="#18a318" stroke-width="1.5"/>
<polygon points="1581,724.4 1581,719.2 1578.8,719.2 1583.2,714.4 1587.6,719.2 1585.4,719.2 1585.4,724.4" fill="#62d846" stroke="#18a318" stroke-width="0.9"/>
<polygon points="1575.8,710.6 1577.8,708.4 1579.8,710.6 1577.8,712.8" fill="#e6ecfb" stroke="#98a6e6" stroke-width="0.7"/>
<polygon points="1577.8,708.4 1579.8,710.6 1577.8,710.6" fill="#6fb8f4"/>
<rect x="1560.2" y="776" width="27.8" height="30.8" fill="#000"/>
<rect x="1563.4" y="777.5" width="23.2" height="27.8" fill="#fff"/>
<path d="M1568.4 785.5V800.6H1581.2" fill="none" stroke="#35356f" stroke-width="1.9"/>
<polygon points="1566,786.6 1568.4,783.2 1570.8,786.6" fill="#35356f"/>
<polygon points="1580.4,798.2 1583.8,800.6 1580.4,803" fill="#35356f"/>
<polygon points="1569.6,793.4 1580,781.6 1586.2,787 1583.2,789 1581.8,793 1579.2,794.6 1574.2,791.8" fill="#56d23e" stroke="#18a318" stroke-width="0.9"/>
<polygon points="1575.8,786.4 1580,781.6 1586.2,787 1583.2,789 1581.8,793 1578,793.8 1577.8,787" fill="#74e05a"/>
<rect x="1570" y="795" width="3.6" height="3.6" fill="#f4f4fb" stroke="#6f6fa8" stroke-width="0.7"/>
<polygon points="1571.8,777.6 1573.8,775.4 1575.8,777.6 1573.8,779.8" fill="#e6ecfb" stroke="#98a6e6" stroke-width="0.7"/>
<polygon points="1573.8,775.4 1575.8,777.6 1573.8,777.6" fill="#6fb8f4"/>
<rect x="1564.2" y="842.4" width="27.8" height="30.8" fill="#000"/>
<rect x="1567.4" y="843.9" width="23.2" height="27.8" fill="#fff"/>
<path d="M1572.4 851.9V867H1585.2" fill="none" stroke="#35356f" stroke-width="1.9"/>
<polygon points="1570,853 1572.4,849.6 1574.8,853" fill="#35356f"/>
<polygon points="1584.4,864.6 1587.8,867 1584.4,869.4" fill="#35356f"/>
<path d="M1574.2 863L1576.8 859L1579.4 860.8L1582.2 856.4L1585.8 857.4" fill="none" stroke="#18a318" stroke-width="1.5"/>
<polygon points="1581,857.8 1581,852.6 1578.8,852.6 1583.2,847.8 1587.6,852.6 1585.4,852.6 1585.4,857.8" fill="#62d846" stroke="#18a318" stroke-width="0.9"/>
<polygon points="1575.8,844 1577.8,841.8 1579.8,844 1577.8,846.2" fill="#e6ecfb" stroke="#98a6e6" stroke-width="0.7"/>
<polygon points="1577.8,841.8 1579.8,844 1577.8,844" fill="#6fb8f4"/>
<rect x="1677.2" y="655.5" width="15.4" height="9" fill="#fff" rx="1" opacity="0.7"/>
<rect x="1677.8" y="656.1" width="14.2" height="7.8" fill="#000" rx="0.8"/>
<rect x="1682.8" y="657.2" width="7.4" height="5.6" fill="#b9b9e6"/>
<polygon points="1683.6,658.1 1689.3,662 1683.6,662" fill="#ff6a3a"/>
<polygon points="1684.4,657.8 1689.6,657.8 1689.6,661.2" fill="#eef0fb"/>
<polygon points="1692,656.3 1693.4,656.3 1698,660 1693.4,663.7 1692,663.7" fill="#fff" stroke="#000" stroke-width="0.9"/>
<rect x="1835.8" y="721.8" width="15.4" height="9" fill="#fff" rx="1" opacity="0.7"/>
<rect x="1836.4" y="722.4" width="14.2" height="7.8" fill="#000" rx="0.8"/>
<rect x="1841.4" y="723.5" width="7.4" height="5.6" fill="#b9b9e6"/>
<polygon points="1842.2,724.4 1847.9,728.3 1842.2,728.3" fill="#ff6a3a"/>
<polygon points="1843,724.1 1848.2,724.1 1848.2,727.5" fill="#eef0fb"/>
<polygon points="1850.6,722.6 1852,722.6 1856.6,726.3 1852,730 1850.6,730" fill="#fff" stroke="#000" stroke-width="0.9"/>
<rect x="1756.8" y="788.9" width="15.4" height="9" fill="#fff" rx="1" opacity="0.7"/>
<rect x="1757.4" y="789.5" width="14.2" height="7.8" fill="#000" rx="0.8"/>
<rect x="1762.4" y="790.6" width="7.4" height="5.6" fill="#b9b9e6"/>
<polygon points="1763.2,791.5 1768.9,795.4 1763.2,795.4" fill="#ff6a3a"/>
<polygon points="1764,791.2 1769.2,791.2 1769.2,794.6" fill="#eef0fb"/>
<polygon points="1771.6,789.7 1773,789.7 1777.6,793.4 1773,797.1 1771.6,797.1" fill="#fff" stroke="#000" stroke-width="0.9"/>
<rect x="2115" y="578" width="15.4" height="9" fill="#fff" rx="1" opacity="0.7"/>
<rect x="2115.6" y="578.6" width="14.2" height="7.8" fill="#000" rx="0.8"/>
<rect x="2120.6" y="579.7" width="7.4" height="5.6" fill="#b9b9e6"/>
<polygon points="2121.4,580.6 2127.1,584.5 2121.4,584.5" fill="#ff6a3a"/>
<polygon points="2122.2,580.3 2127.4,580.3 2127.4,583.7" fill="#eef0fb"/>
<polygon points="2129.8,578.8 2131.2,578.8 2135.8,582.5 2131.2,586.2 2129.8,586.2" fill="#fff" stroke="#000" stroke-width="0.9"/>
<rect x="2229.8" y="584" width="15.4" height="9" fill="#fff" rx="1" opacity="0.7"/>
<rect x="2230.4" y="584.6" width="14.2" height="7.8" fill="#000" rx="0.8"/>
<rect x="2235.4" y="585.7" width="7.4" height="5.6" fill="#b9b9e6"/>
<polygon points="2236.2,586.6 2241.9,590.5 2236.2,590.5" fill="#ff6a3a"/>
<polygon points="2237,586.3 2242.2,586.3 2242.2,589.7" fill="#eef0fb"/>
<polygon points="2244.6,584.8 2246,584.8 2250.6,588.5 2246,592.2 2244.6,592.2" fill="#000" stroke="#000" stroke-width="0.9"/>
<rect x="1914" y="826.8" width="15.4" height="9" fill="#fff" rx="1" opacity="0.7"/>
<rect x="1914.6" y="827.4" width="14.2" height="7.8" fill="#000" rx="0.8"/>
<rect x="1919.6" y="828.5" width="7.4" height="5.6" fill="#b9b9e6"/>
<polygon points="1920.4,829.4 1926.1,833.3 1920.4,833.3" fill="#ff6a3a"/>
<polygon points="1921.2,829.1 1926.4,829.1 1926.4,832.5" fill="#eef0fb"/>
<polygon points="1928.8,827.6 1930.2,827.6 1934.8,831.3 1930.2,835 1928.8,835" fill="#000" stroke="#000" stroke-width="0.9"/>
<rect x="2063.3" y="575" width="15.4" height="15.4" fill="#fff" rx="1" opacity="0.7"/>
<rect x="2064" y="575.7" width="14" height="14" fill="#fff" stroke="#000" stroke-width="1.2"/>
<path d="M2067.4 582.7H2074.6M2071 579.1V586.3" fill="none" stroke="#6a6ac4" stroke-width="2.1"/>
<rect x="1991.3" y="652.5" width="15.4" height="15.4" fill="#fff" rx="1" opacity="0.7"/>
<rect x="1992" y="653.2" width="14" height="14" fill="#fff" stroke="#000" stroke-width="1.2"/>
<path d="M1995.8 657L2002.2 663.4M2002.2 657L1995.8 663.4" fill="none" stroke="#6a6ac4" stroke-width="2.3"/>
<rect x="2027.3" y="652.5" width="15.4" height="15.4" fill="#fff" rx="1" opacity="0.7"/>
<rect x="2028" y="653.2" width="14" height="14" fill="#fff" stroke="#000" stroke-width="1.2"/>
<path d="M2031.4 660.2H2038.6M2035 656.6V663.8" fill="none" stroke="#6a6ac4" stroke-width="2.1"/>
<rect x="1934.3" y="718.8" width="15.4" height="15.4" fill="#fff" rx="1" opacity="0.7"/>
<rect x="1935" y="719.5" width="14" height="14" fill="#fff" stroke="#000" stroke-width="1.2"/>
<path d="M1938.8 726.5H1945.2" fill="none" stroke="#6a6ac4" stroke-width="2.1"/>
<rect x="1694.2" y="785.6" width="15.4" height="15.4" fill="#fff" rx="1" opacity="0.7"/>
<rect x="1694.9" y="786.3" width="14" height="14" fill="#fff" stroke="#000" stroke-width="1.2"/>
<path d="M1698.3 793.3H1705.5M1701.9 789.7V796.9" fill="none" stroke="#6a6ac4" stroke-width="2.1"/>
<rect x="1855.9" y="785.6" width="15.4" height="15.4" fill="#fff" rx="1" opacity="0.7"/>
<rect x="1856.6" y="786.3" width="14" height="14" fill="#fff" stroke="#000" stroke-width="1.2"/>
<path d="M1860.4 790.1L1866.8 796.5M1866.8 790.1L1860.4 796.5" fill="none" stroke="#6a6ac4" stroke-width="2.3"/>
<rect x="2124.4" y="516.3" width="22.2" height="9.2" fill="#fff" rx="1" opacity="0.7"/>
<rect x="2125" y="516.9" width="21" height="8" fill="#fff" stroke="#000" stroke-width="1.1" rx="0.8"/>
<rect x="2125" y="516.9" width="4.6" height="8" fill="#000"/>
<polygon points="2134.6,520.9 2137.2,518.5 2139.8,520.9 2137.2,523.3" fill="#dfe6fb" stroke="#7f92e0" stroke-width="0.8"/>
<polygon points="2137.2,518.5 2139.8,520.9 2137.2,520.9" fill="#6fb2f2"/>
<rect x="2115.6" y="618.9" width="22.2" height="9.2" fill="#fff" rx="1" opacity="0.7"/>
<rect x="2116.2" y="619.5" width="21" height="8" fill="#fff" stroke="#000" stroke-width="1.1" rx="0.8"/>
<rect x="2116.2" y="619.5" width="4.6" height="8" fill="#000"/>
<polygon points="2125.8,623.5 2128.4,621.1 2131,623.5 2128.4,625.9" fill="#dfe6fb" stroke="#7f92e0" stroke-width="0.8"/>
<polygon points="2128.4,621.1 2131,623.5 2128.4,623.5" fill="#6fb2f2"/>
<rect x="2192.6" y="577.4" width="14.8" height="21.2" fill="#fff" rx="1" opacity="0.7"/>
<rect x="2193.2" y="578" width="13.6" height="20" fill="#fff" stroke="#555" stroke-width="1.1"/>
<rect x="2194.2" y="583.2" width="2.8" height="2.8" fill="#9fe08f" stroke="#189a18" stroke-width="0.9"/>
<path d="M2197.8 584.4H2199.8L2203.4 588.4H2206.8" fill="none" stroke="#189a18" stroke-width="1.5"/>
<rect x="2194.2" y="590.2" width="2.8" height="2.8" fill="#b9b9f0" stroke="#6a6ac4" stroke-width="0.8"/>
<text x="1439.45" y="583.8" font-size="6.9" fill="#0404f4" textLength="37.39" lengthAdjust="spacingAndGlyphs" stroke="#0404f4" stroke-width="0.22">Egc_facEgas</text>
<text x="1439.45" y="592.8" font-size="6.9" fill="#080808" textLength="31.29" lengthAdjust="spacingAndGlyphs" stroke="#080808" stroke-width="0.22">0.141 rpm</text>
<text x="1431.95" y="666.9" font-size="6.9" fill="#0404f4" textLength="51.79" lengthAdjust="spacingAndGlyphs" stroke="#0404f4" stroke-width="0.22">Epm_rpmEngSpd</text>
<text x="1431.95" y="676" font-size="6.9" fill="#080808" textLength="40.99" lengthAdjust="spacingAndGlyphs" stroke="#080808" stroke-width="0.22">231.00 U/min</text>
<text x="1511.25" y="683" font-size="6.9" fill="#0404f4" textLength="125.19" lengthAdjust="spacingAndGlyphs" stroke="#0404f4" stroke-width="0.22">Tqs_rpmEngSpdfacEgas2facEgasFilt_MAP</text>
<text x="1511.25" y="692" font-size="6.9" fill="#080808" textLength="46.99" lengthAdjust="spacingAndGlyphs" stroke="#080808" stroke-width="0.22">0.0522 GradKW</text>
<text x="1664.95" y="673" font-size="6.9" fill="#0404f4" textLength="47.69" lengthAdjust="spacingAndGlyphs" stroke="#0404f4" stroke-width="0.22">Tqs_facEgasFilt</text>
<text x="1664.95" y="682.6" font-size="6.9" fill="#080808" textLength="39.39" lengthAdjust="spacingAndGlyphs" stroke="#080808" stroke-width="0.22">1.06 GradKW</text>
<text x="1534.15" y="748.7" font-size="6.9" fill="#0404f4" textLength="87.19" lengthAdjust="spacingAndGlyphs" stroke="#0404f4" stroke-width="0.22">Tqs_rpmEngSpd2tqMax_CUR</text>
<text x="1534.15" y="757.7" font-size="6.9" fill="#080808" textLength="43.09" lengthAdjust="spacingAndGlyphs" stroke="#080808" stroke-width="0.22">40.00 GradKW</text>
<text x="1830.36" y="739.7" font-size="6.9" fill="#0404f4" textLength="32.99" lengthAdjust="spacingAndGlyphs" stroke="#0404f4" stroke-width="0.22">Tqs_tqMax</text>
<text x="1830.36" y="748.7" font-size="6.9" fill="#080808" textLength="39.69" lengthAdjust="spacingAndGlyphs" stroke="#080808" stroke-width="0.22">2.63 GradKW</text>
<text x="1436.75" y="812.8" font-size="6.9" fill="#0404f4" textLength="42.69" lengthAdjust="spacingAndGlyphs" stroke="#0404f4" stroke-width="0.22">Amf_facRelAir</text>
<text x="1436.75" y="822" font-size="6.9" fill="#080808" textLength="27.69" lengthAdjust="spacingAndGlyphs" stroke="#080808" stroke-width="0.22">1.88 rpm</text>
<text x="1515.56" y="815.6" font-size="6.9" fill="#0404f4" textLength="116.89" lengthAdjust="spacingAndGlyphs" stroke="#0404f4" stroke-width="0.22">Tqs_rpmEngSpdfacRelAir2tqDrag_MAP</text>
<text x="1515.56" y="825.3" font-size="6.9" fill="#080808" textLength="60.69" lengthAdjust="spacingAndGlyphs" stroke="#080808" stroke-width="0.22">[Value n/a] GradKW</text>
<text x="1750.25" y="807" font-size="6.9" fill="#0404f4" textLength="35.39" lengthAdjust="spacingAndGlyphs" stroke="#0404f4" stroke-width="0.22">Tqs_tqDrag</text>
<text x="1750.25" y="815.6" font-size="6.9" fill="#080808" textLength="40.09" lengthAdjust="spacingAndGlyphs" stroke="#080808" stroke-width="0.22">3.41 GradKW</text>
<text x="1441.86" y="872.8" font-size="6.9" fill="#0404f4" textLength="32.49" lengthAdjust="spacingAndGlyphs" stroke="#0404f4" stroke-width="0.22">Ctc_atCool</text>
<text x="1441.86" y="881.6" font-size="6.9" fill="#080808" textLength="29.79" lengthAdjust="spacingAndGlyphs" stroke="#080808" stroke-width="0.22">4.39 Grad</text>
<text x="1540.65" y="881.6" font-size="6.9" fill="#0404f4" textLength="73.99" lengthAdjust="spacingAndGlyphs" stroke="#0404f4" stroke-width="0.22">Tqs_atCool2tqDrag_CUR</text>
<text x="1540.65" y="890.6" font-size="6.9" fill="#080808" textLength="60.69" lengthAdjust="spacingAndGlyphs" stroke="#080808" stroke-width="0.22">[Value n/a] GradKW</text>
<text x="1755.36" y="913.4" font-size="6.9" fill="#0404f4" textLength="57.49" lengthAdjust="spacingAndGlyphs" stroke="#0404f4" stroke-width="0.22">Isc_facIdleSpdStab</text>
<text x="1755.36" y="922.4" font-size="6.9" fill="#080808" textLength="31.79" lengthAdjust="spacingAndGlyphs" stroke="#080808" stroke-width="0.22">0.115 m/K</text>
<text x="1908.75" y="844.6" font-size="6.9" fill="#0404f4" textLength="31.89" lengthAdjust="spacingAndGlyphs" stroke="#0404f4" stroke-width="0.22">Tqs_tqMin</text>
<text x="1908.75" y="853.8" font-size="6.9" fill="#080808" textLength="33.59" lengthAdjust="spacingAndGlyphs" stroke="#080808" stroke-width="0.22">0.563 Grad</text>
<text x="2094.76" y="533.8" font-size="6.9" fill="#0404f4" textLength="80.99" lengthAdjust="spacingAndGlyphs" stroke="#0404f4" stroke-width="0.22">Tqs_flgTorqueReqOverride</text>
<text x="2094.76" y="542.8" font-size="6.9" fill="#080808" textLength="29.49" lengthAdjust="spacingAndGlyphs" stroke="#080808" stroke-width="0.22">0.00 grad</text>
<text x="2103.66" y="595.8" font-size="6.9" fill="#0404f4" textLength="45.59" lengthAdjust="spacingAndGlyphs" stroke="#0404f4" stroke-width="0.22">Tqs_tqReqCalc</text>
<text x="2103.66" y="604.7" font-size="6.9" fill="#080808" textLength="29.99" lengthAdjust="spacingAndGlyphs" stroke="#080808" stroke-width="0.22">6.81 Grad</text>
<text x="2103.66" y="636.6" font-size="6.9" fill="#0404f4" textLength="45.19" lengthAdjust="spacingAndGlyphs" stroke="#0404f4" stroke-width="0.22">Tqs_tqReqMan</text>
<text x="2103.66" y="645.8" font-size="6.9" fill="#080808" textLength="29.49" lengthAdjust="spacingAndGlyphs" stroke="#080808" stroke-width="0.22">0.00 Grad</text>
<text x="2224.26" y="602" font-size="6.9" fill="#0404f4" textLength="32.39" lengthAdjust="spacingAndGlyphs" stroke="#0404f4" stroke-width="0.22">Tqs_tqReq</text>
<text x="2224.26" y="611" font-size="6.9" fill="#080808" textLength="29.89" lengthAdjust="spacingAndGlyphs" stroke="#080808" stroke-width="0.22">1.27 Grad</text>
<text x="1704.15" y="637.7" font-size="6.9" fill="#080808" textLength="35.79" lengthAdjust="spacingAndGlyphs" stroke="#080808" stroke-width="0.22">/3/Tqs_calc</text>
<text x="1862.75" y="704.9" font-size="6.9" fill="#080808" textLength="35.79" lengthAdjust="spacingAndGlyphs" stroke="#080808" stroke-width="0.22">/4/Tqs_calc</text>
<text x="1783.86" y="770.6" font-size="6.9" fill="#080808" textLength="35.79" lengthAdjust="spacingAndGlyphs" stroke="#080808" stroke-width="0.22">/5/Tqs_calc</text>
<text x="1940.25" y="808.8" font-size="6.9" fill="#080808" textLength="36.39" lengthAdjust="spacingAndGlyphs" stroke="#080808" stroke-width="0.22">/7/Tqs_calc</text>
<text x="2141.86" y="560.9" font-size="6.9" fill="#080808" textLength="35.99" lengthAdjust="spacingAndGlyphs" stroke="#080808" stroke-width="0.22">/8/Tqs_calc</text>
<text x="2256.16" y="566.8" font-size="6.9" fill="#080808" textLength="35.79" lengthAdjust="spacingAndGlyphs" stroke="#080808" stroke-width="0.22">/9/Tqs_calc</text>
<rect x="1411" y="497.4" width="13" height="10" fill="#fff" stroke="#1c1c1c" stroke-width="1.15" rx="2.8"/>
<path d="M1413.8 502.4H1421.2" fill="none" stroke="#000" stroke-width="2"/>
<rect x="1416.4" y="942.5" width="21.5" height="10.3" fill="#0a2f7f"/>
<text x="1418.14" y="950.1" font-size="9.2" fill="#fff" textLength="17.92" lengthAdjust="spacingAndGlyphs">EH2</text>
<rect x="2267.3" y="942.5" width="39.3" height="10.3" fill="#0a2f7f"/>
<text x="2268.94" y="950.1" font-size="9.2" fill="#fff" textLength="35.92" lengthAdjust="spacingAndGlyphs">Compact</text>
<text x="1855.65" y="952.8" font-size="6.9" fill="#0404f4" textLength="10.99" lengthAdjust="spacingAndGlyphs" stroke="#0404f4" stroke-width="0.22">Tqs</text>
<polygon points="1396.4,893.6 1409.2,893.6 1416.2,900.2 1409.2,906.8 1396.4,906.8" fill="#fff" stroke="#454545" stroke-width="1"/>
<rect x="1397.7" y="896.1" width="8.5" height="8.2" fill="url(#org)" stroke="#f08a6a" stroke-width="0.5"/>
<polygon points="2306.5,582 2319.3,582 2326.3,588.6 2319.3,595.2 2306.5,595.2" fill="#fff" stroke="#454545" stroke-width="1"/>
<rect x="2307.8" y="584.5" width="8.5" height="8.2" fill="url(#org)" stroke="#f08a6a" stroke-width="0.5"/>
<text x="2328.86" y="604.8" font-size="6.9" fill="#0404f4" textLength="32.49" lengthAdjust="spacingAndGlyphs" stroke="#0404f4" stroke-width="0.22">Tqs_tqReq</text>
<text x="2328.86" y="613.8" font-size="6.9" fill="#080808" textLength="29.69" lengthAdjust="spacingAndGlyphs" stroke="#080808" stroke-width="0.22">1.27 Grad</text>
<rect x="1109" y="858.1" width="137" height="64" fill="#08c408"/>
<rect x="1112" y="861.5" width="130.8" height="57.2" fill="#add7ea" stroke="#2a2a2a" stroke-width="1.4"/>
<polygon points="1242.8,867.6 1255.6,867.6 1262.6,874.2 1255.6,880.8 1242.8,880.8" fill="#fff" stroke="#454545" stroke-width="1"/>
<rect x="1244.1" y="870.1" width="8.5" height="8.2" fill="url(#org)" stroke="#f08a6a" stroke-width="0.5"/>
<polygon points="1242.8,893.4 1255.6,893.4 1262.6,900 1255.6,906.6 1242.8,906.6" fill="#fff" stroke="#454545" stroke-width="1"/>
<rect x="1244.1" y="895.9" width="8.5" height="8.2" fill="url(#org)" stroke="#f08a6a" stroke-width="0.5"/>
<text x="1188.75" y="876.4" font-size="6.9" fill="#0404f4" textLength="50.39" lengthAdjust="spacingAndGlyphs" stroke="#0404f4" stroke-width="0.22">Isc_flgFuelCutoff</text>
<text x="1188.75" y="885.6" font-size="6.9" fill="#080808" textLength="29.29" lengthAdjust="spacingAndGlyphs" stroke="#080808" stroke-width="0.22">4.00 grad</text>
<text x="1181.36" y="901.6" font-size="6.9" fill="#0404f4" textLength="57.79" lengthAdjust="spacingAndGlyphs" stroke="#0404f4" stroke-width="0.22">Isc_facIdleSpdStab</text>
<text x="1181.36" y="910.5" font-size="6.9" fill="#080808" textLength="32.09" lengthAdjust="spacingAndGlyphs" stroke="#080808" stroke-width="0.22">0.115 m/K</text>
<rect x="1107.2" y="857.5" width="13" height="10" fill="#fff" stroke="#1c1c1c" stroke-width="1.15" rx="2.8"/>
<path d="M1110.4 862.5H1117M1113.7 859.4V865.6" fill="none" stroke="#000" stroke-width="2"/>
<rect x="1112.2" y="919.2" width="21.5" height="9.6" fill="#0a7fc5"/>
<text x="1113.94" y="926.1" font-size="9.2" fill="#fff" textLength="17.72" lengthAdjust="spacingAndGlyphs">EH1</text>
<rect x="1204" y="919.2" width="38.8" height="9.6" fill="#0a7fc5"/>
<text x="1205.54" y="926.1" font-size="9.2" fill="#fff" textLength="35.52" lengthAdjust="spacingAndGlyphs">Compact</text>
<text x="1172.86" y="928.8" font-size="6.9" fill="#0404f4" textLength="9.19" lengthAdjust="spacingAndGlyphs" stroke="#0404f4" stroke-width="0.22">Isc</text>
<text x="1335.45" y="915.7" font-size="6.9" fill="#0404f4" textLength="57.69" lengthAdjust="spacingAndGlyphs" stroke="#0404f4" stroke-width="0.22">Isc_facIdleSpdStab</text>
<text x="1335.45" y="924.6" font-size="6.9" fill="#080808" textLength="31.89" lengthAdjust="spacingAndGlyphs" stroke="#080808" stroke-width="0.22">0.115 m/K</text>
</g>
</svg>
</div>
</body></html>
